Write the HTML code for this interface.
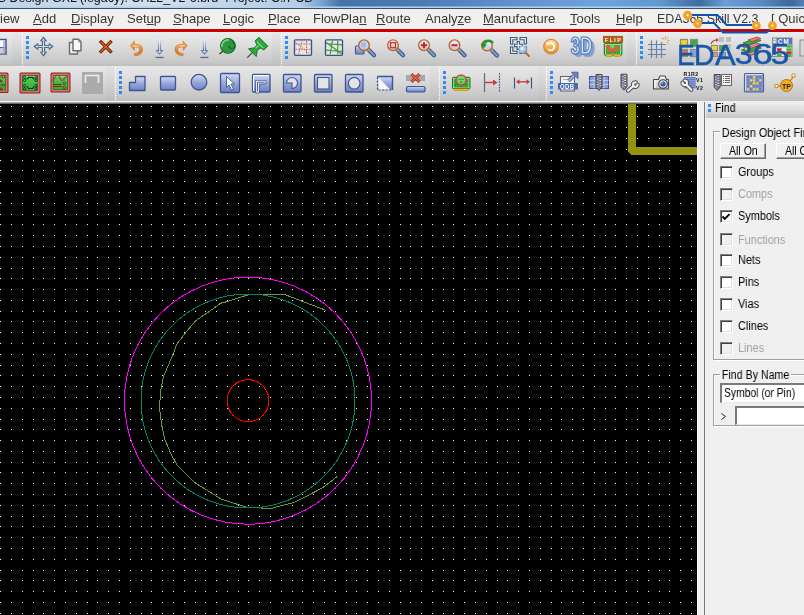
<!DOCTYPE html>
<html><head><meta charset="utf-8">
<style>
*{margin:0;padding:0;box-sizing:border-box}
#menu,#panel,.lbl,.btn,.a{will-change:transform}html,body{width:804px;height:615px;overflow:hidden;background:#000;font-family:"Liberation Sans",sans-serif;font-size:12px;color:#000}
.a{position:absolute}
#title{left:0;top:0;width:804px;height:8px;background:linear-gradient(#0000 6px,#b8d0e8 7px),linear-gradient(90deg,#c0d4ea 0px,#cfdff0 150px,#b4cce6 300px,#6f9ccc 325px,#4474aa 340px,#4a7cb4 420px,#5c90cc 500px,#6ea4dc 600px,#6098d0 660px,#3e6c9e 700px,#6a9ed6 725px,#5a8cc4 760px,#3e6a9a 790px,#5080b8 804px);overflow:hidden}
#title span{position:absolute;left:-62px;top:-9px;line-height:14px;font-size:12.5px;color:#111;white-space:nowrap}
#tline{left:0;top:8px;width:804px;height:1px;background:#3a5068}
#menu{left:0;top:9px;width:804px;height:20px;background:#f0f0f0}
.m{position:absolute;top:2px;font-size:13px;line-height:15px;white-space:nowrap;transform-origin:0 0;color:#383838}
.m u{text-decoration:underline;text-decoration-thickness:1px;text-underline-offset:1px}
#red{left:0;top:29px;width:804px;height:3px;background:#cc0000}
#tb1{left:0;top:32px;width:804px;height:34px;background:linear-gradient(#ececec,#dbdbdb 45%,#c8c8c8 88%,#bdbdbd)}
#tb2{left:0;top:66px;width:804px;height:35px;background:linear-gradient(#e8e8e8,#d9d9d9 45%,#c8c8c8 85%,#bfbfbf)}
#tbl{left:0;top:101px;width:804px;height:3px;background:linear-gradient(#fafafa,#e4e4e4)}
.sep{position:absolute;width:1px;background:repeating-linear-gradient(#fff 0 1px,transparent 1px 2px)}
.grip{position:absolute;width:3px;background:repeating-linear-gradient(#2a8cff 0 3px,transparent 3px 5px)}
#canvas{left:0;top:104px;width:697px;height:511px;background:#000;overflow:hidden}
#split{left:697px;top:101px;width:8px;height:514px;background:#f0f0f0}
#panel{left:705px;top:101px;width:99px;height:514px;background:#f0f0f0}
#phead{left:0;top:0;width:99px;height:17px;background:linear-gradient(#f2f2f2,#dadada 60%,#c8c8c8)}
.cb{position:absolute;width:13px;height:13px;background:#fff;border-top:1px solid #808080;border-left:1px solid #808080;border-right:1px solid #fff;border-bottom:1px solid #fff;box-shadow:inset 1px 1px 0 #404040, inset -1px -1px 0 #dfdfdf}
.cb.dis{background:#f0f0f0}
.lbl{position:absolute;white-space:nowrap}
.lbl.dis{color:#a0a0a0}
.cb{left:720px}
.lbl{left:738px;transform:scaleX(.91);transform-origin:0 0}
.btn{background:#f0f0f0;border-top:1px solid #fff;border-left:1px solid #fff;border-right:1px solid #696969;border-bottom:1px solid #696969;box-shadow:inset -1px -1px 0 #a0a0a0;text-align:center;line-height:14px;white-space:nowrap}
</style></head><body>
<div id="title" class="a"><span>Allegro PCB Design GXL (legacy): CH22_V2-6.brd &nbsp;Project: C:/PCB</span></div>
<div id="tline" class="a"></div>
<div id="menu" class="a">
<span class="m" style="left:0px">iew</span>
<span class="m" style="left:33px"><u>A</u>dd</span>
<span class="m" style="left:71px"><u>D</u>isplay</span>
<span class="m" style="left:127px">Set<u>u</u>p</span>
<span class="m" style="left:173px"><u>S</u>hape</span>
<span class="m" style="left:223px"><u>L</u>ogic</span>
<span class="m" style="left:268px"><u>P</u>lace</span>
<span class="m" style="left:313px">FlowPla<u>n</u></span>
<span class="m" style="left:376px"><u>R</u>oute</span>
<span class="m" style="left:425px">Analy<u>z</u>e</span>
<span class="m" style="left:483px"><u>M</u>anufacture</span>
<span class="m" style="left:570px"><u>T</u>ools</span>
<span class="m" style="left:616px"><u>H</u>elp</span>
<span class="m" style="left:657px;transform:scaleX(.955)">EDA365 Skill V2.3</span>
<span class="m" style="left:771px">[ Quick</span>
</div>
<div id="red" class="a"></div>
<div id="tb1" class="a"></div>
<div class="a" style="left:0;top:28px;width:804px;height:1px;background:#e2f6f6"></div>
<div class="a" style="left:0;top:32px;width:804px;height:1px;background:#e4f4f4"></div>
<div id="tb2" class="a"></div>
<div id="tbl" class="a"></div>
<svg class="a" style="left:0;top:0" width="804" height="104" viewBox="0 0 804 104">
<defs>
<linearGradient id="gblue" x1="0" y1="0" x2="0" y2="1"><stop offset="0" stop-color="#c4cff0"/><stop offset="1" stop-color="#6a7dbd"/></linearGradient>
<linearGradient id="ggreen" x1="0" y1="0" x2="0" y2="1"><stop offset="0" stop-color="#7ada7a"/><stop offset="1" stop-color="#2a9a2a"/></linearGradient>
<linearGradient id="gorange" x1="0" y1="0" x2="0" y2="1"><stop offset="0" stop-color="#ffe8c0"/><stop offset=".5" stop-color="#f8b050"/><stop offset="1" stop-color="#e88020"/></linearGradient>
<linearGradient id="glens" x1="0" y1="0" x2="0" y2="1"><stop offset="0" stop-color="#f4f8ff"/><stop offset="1" stop-color="#b0c0e4"/></linearGradient>
<linearGradient id="ggray" x1="0" y1="0" x2="0" y2="1"><stop offset="0" stop-color="#fafafa"/><stop offset="1" stop-color="#c0c0c0"/></linearGradient>
<pattern id="sep" width="1" height="2" patternUnits="userSpaceOnUse"><rect width="1" height="1" fill="#fff"/></pattern>
<pattern id="grip" width="3" height="5" patternUnits="userSpaceOnUse"><rect width="3" height="3" fill="#2288ff"/></pattern>
<g id="handle"><path d="M5 5l5 5" stroke="#3e5a8a" stroke-width="4.2" stroke-linecap="round"/><path d="M5 5l5 5" stroke="#7d9acb" stroke-width="2" stroke-linecap="round"/><path d="M3.6 3.6l1.6 1.6" stroke="#e0a040" stroke-width="2.4"/></g>
<g id="lens"><use href="#handle"/><circle r="5.3" fill="url(#glens)" stroke="#b4662a" stroke-width="1.4"/><circle r="4.2" fill="none" stroke="#e8c8b0" stroke-width=".7"/></g>
<linearGradient id="gshaft" x1="0" y1="0" x2="0" y2="1"><stop offset="0" stop-color="#e8eef6"/><stop offset="1" stop-color="#4d6d94"/></linearGradient>
<g id="darrow"><rect x="-1.6" y="0" width="3.2" height="12.5" fill="url(#gshaft)"/><rect x="-.5" y="1" width="1" height="11" fill="#f0f4fa" opacity=".7"/><path d="M-4 11.3L0 15.8 4 11.3H1.4L0 13-1.4 11.3z" fill="#4d6d94"/><path d="M-2.2 12l2.2 2.5 2.2-2.5" fill="#c8d4e4"/><rect x="-4" y="17.8" width="8" height="1.3" fill="#4d6d94"/></g>
<linearGradient id="gundo" x1="0" y1="0" x2="1" y2="1"><stop offset="0" stop-color="#f8d8a8"/><stop offset=".6" stop-color="#e8963e"/><stop offset="1" stop-color="#c86a1e"/></linearGradient>
<g id="undo"><path d="M1 5.2L5.6 .8 5.3 10.2z" fill="url(#gundo)" stroke="#d07a30" stroke-width=".5"/><path d="M4.5 5.6C8.5 5 12.2 6.2 12.2 9.4 12.2 12 9.5 14 6.5 14.4" fill="none" stroke="#d07a30" stroke-width="3.4" stroke-linecap="round"/><path d="M4.5 5.6C8.5 5 12.2 6.2 12.2 9.4 12.2 12 9.5 14 6.5 14.4" fill="none" stroke="url(#gundo)" stroke-width="2" stroke-linecap="round"/></g>
<linearGradient id="gbox" x1="0" y1="0" x2="0" y2="1"><stop offset="0" stop-color="#d4dcf4"/><stop offset=".5" stop-color="#98a8dc"/><stop offset="1" stop-color="#6e82c0"/></linearGradient>
<g id="wrench"><path d="M-2.5 0H-9.5M1.76-1.48A2.3 2.3 0 1 0 1.76 1.48" fill="none" stroke="#505050" stroke-width="4.2" stroke-linecap="round"/><path d="M-2.5 0H-9.5M1.76-1.48A2.3 2.3 0 1 0 1.76 1.48" fill="none" stroke="#f2f2f2" stroke-width="2.2" stroke-linecap="round"/></g>
<g id="drill"><path d="M0 0h6v12.5l-3 3.5-3-3.5z" fill="#8a8a98" stroke="#3a3a44" stroke-width=".9" stroke-linejoin="round"/><path d="M1 2.5l4-1.5M1 5l4-1.5M1 7.5l4-1.5M1 10l4-1.5M1 12.5l4-1.5" stroke="#e8ecf8" stroke-width="1"/><path d="M1 1.5l4 1M1 4l4 1M1 6.5l4 1M1 9l4 1M1 11.5l4 1" stroke="#404a68" stroke-width=".7"/></g>
</defs>
<!-- group boundaries (subtle) -->
<g fill="#000" opacity=".018">
<rect x="12" y="32" width="9" height="33" rx="3"/>
<rect x="272" y="32" width="8" height="33" rx="3"/>
<rect x="627" y="32" width="8" height="33" rx="3"/>
<rect x="106" y="66" width="8" height="35" rx="3"/>
<rect x="430" y="66" width="8" height="35" rx="3"/>
<rect x="538" y="66" width="7" height="35" rx="3"/>
</g>
<!-- separators -->
<rect x="22" y="33" width="1" height="1" fill="#fff"/><rect x="22" y="35" width="1" height="1" fill="#fff"/><rect x="22" y="37" width="1" height="1" fill="#fff"/><rect x="22" y="39" width="1" height="1" fill="#fff"/><rect x="22" y="41" width="1" height="1" fill="#fff"/><rect x="22" y="43" width="1" height="1" fill="#fff"/><rect x="22" y="45" width="1" height="1" fill="#fff"/><rect x="22" y="47" width="1" height="1" fill="#fff"/><rect x="22" y="49" width="1" height="1" fill="#fff"/><rect x="22" y="51" width="1" height="1" fill="#fff"/><rect x="22" y="53" width="1" height="1" fill="#fff"/><rect x="22" y="55" width="1" height="1" fill="#fff"/><rect x="22" y="57" width="1" height="1" fill="#fff"/><rect x="22" y="59" width="1" height="1" fill="#fff"/><rect x="22" y="61" width="1" height="1" fill="#fff"/><rect x="22" y="63" width="1" height="1" fill="#fff"/><rect x="22" y="65" width="1" height="1" fill="#fff"/>
<rect x="281" y="33" width="1" height="1" fill="#fff"/><rect x="281" y="35" width="1" height="1" fill="#fff"/><rect x="281" y="37" width="1" height="1" fill="#fff"/><rect x="281" y="39" width="1" height="1" fill="#fff"/><rect x="281" y="41" width="1" height="1" fill="#fff"/><rect x="281" y="43" width="1" height="1" fill="#fff"/><rect x="281" y="45" width="1" height="1" fill="#fff"/><rect x="281" y="47" width="1" height="1" fill="#fff"/><rect x="281" y="49" width="1" height="1" fill="#fff"/><rect x="281" y="51" width="1" height="1" fill="#fff"/><rect x="281" y="53" width="1" height="1" fill="#fff"/><rect x="281" y="55" width="1" height="1" fill="#fff"/><rect x="281" y="57" width="1" height="1" fill="#fff"/><rect x="281" y="59" width="1" height="1" fill="#fff"/><rect x="281" y="61" width="1" height="1" fill="#fff"/><rect x="281" y="63" width="1" height="1" fill="#fff"/><rect x="281" y="65" width="1" height="1" fill="#fff"/>
<rect x="636" y="33" width="1" height="1" fill="#fff"/><rect x="636" y="35" width="1" height="1" fill="#fff"/><rect x="636" y="37" width="1" height="1" fill="#fff"/><rect x="636" y="39" width="1" height="1" fill="#fff"/><rect x="636" y="41" width="1" height="1" fill="#fff"/><rect x="636" y="43" width="1" height="1" fill="#fff"/><rect x="636" y="45" width="1" height="1" fill="#fff"/><rect x="636" y="47" width="1" height="1" fill="#fff"/><rect x="636" y="49" width="1" height="1" fill="#fff"/><rect x="636" y="51" width="1" height="1" fill="#fff"/><rect x="636" y="53" width="1" height="1" fill="#fff"/><rect x="636" y="55" width="1" height="1" fill="#fff"/><rect x="636" y="57" width="1" height="1" fill="#fff"/><rect x="636" y="59" width="1" height="1" fill="#fff"/><rect x="636" y="61" width="1" height="1" fill="#fff"/><rect x="636" y="63" width="1" height="1" fill="#fff"/><rect x="636" y="65" width="1" height="1" fill="#fff"/>
<rect x="115" y="67" width="1" height="1" fill="#fff"/><rect x="115" y="69" width="1" height="1" fill="#fff"/><rect x="115" y="71" width="1" height="1" fill="#fff"/><rect x="115" y="73" width="1" height="1" fill="#fff"/><rect x="115" y="75" width="1" height="1" fill="#fff"/><rect x="115" y="77" width="1" height="1" fill="#fff"/><rect x="115" y="79" width="1" height="1" fill="#fff"/><rect x="115" y="81" width="1" height="1" fill="#fff"/><rect x="115" y="83" width="1" height="1" fill="#fff"/><rect x="115" y="85" width="1" height="1" fill="#fff"/><rect x="115" y="87" width="1" height="1" fill="#fff"/><rect x="115" y="89" width="1" height="1" fill="#fff"/><rect x="115" y="91" width="1" height="1" fill="#fff"/><rect x="115" y="93" width="1" height="1" fill="#fff"/><rect x="115" y="95" width="1" height="1" fill="#fff"/><rect x="115" y="97" width="1" height="1" fill="#fff"/><rect x="115" y="99" width="1" height="1" fill="#fff"/>
<rect x="439" y="67" width="1" height="1" fill="#fff"/><rect x="439" y="69" width="1" height="1" fill="#fff"/><rect x="439" y="71" width="1" height="1" fill="#fff"/><rect x="439" y="73" width="1" height="1" fill="#fff"/><rect x="439" y="75" width="1" height="1" fill="#fff"/><rect x="439" y="77" width="1" height="1" fill="#fff"/><rect x="439" y="79" width="1" height="1" fill="#fff"/><rect x="439" y="81" width="1" height="1" fill="#fff"/><rect x="439" y="83" width="1" height="1" fill="#fff"/><rect x="439" y="85" width="1" height="1" fill="#fff"/><rect x="439" y="87" width="1" height="1" fill="#fff"/><rect x="439" y="89" width="1" height="1" fill="#fff"/><rect x="439" y="91" width="1" height="1" fill="#fff"/><rect x="439" y="93" width="1" height="1" fill="#fff"/><rect x="439" y="95" width="1" height="1" fill="#fff"/><rect x="439" y="97" width="1" height="1" fill="#fff"/><rect x="439" y="99" width="1" height="1" fill="#fff"/>
<rect x="546" y="67" width="1" height="1" fill="#fff"/><rect x="546" y="69" width="1" height="1" fill="#fff"/><rect x="546" y="71" width="1" height="1" fill="#fff"/><rect x="546" y="73" width="1" height="1" fill="#fff"/><rect x="546" y="75" width="1" height="1" fill="#fff"/><rect x="546" y="77" width="1" height="1" fill="#fff"/><rect x="546" y="79" width="1" height="1" fill="#fff"/><rect x="546" y="81" width="1" height="1" fill="#fff"/><rect x="546" y="83" width="1" height="1" fill="#fff"/><rect x="546" y="85" width="1" height="1" fill="#fff"/><rect x="546" y="87" width="1" height="1" fill="#fff"/><rect x="546" y="89" width="1" height="1" fill="#fff"/><rect x="546" y="91" width="1" height="1" fill="#fff"/><rect x="546" y="93" width="1" height="1" fill="#fff"/><rect x="546" y="95" width="1" height="1" fill="#fff"/><rect x="546" y="97" width="1" height="1" fill="#fff"/><rect x="546" y="99" width="1" height="1" fill="#fff"/>
<!-- grips -->
<rect x="26" y="36" width="3" height="3" fill="#2a8cff"/><rect x="26" y="41" width="3" height="3" fill="#2a8cff"/><rect x="26" y="46" width="3" height="3" fill="#2a8cff"/><rect x="26" y="51" width="3" height="3" fill="#2a8cff"/><rect x="26" y="56" width="3" height="3" fill="#2a8cff"/>
<rect x="285" y="36" width="3" height="3" fill="#2a8cff"/><rect x="285" y="41" width="3" height="3" fill="#2a8cff"/><rect x="285" y="46" width="3" height="3" fill="#2a8cff"/><rect x="285" y="51" width="3" height="3" fill="#2a8cff"/><rect x="285" y="56" width="3" height="3" fill="#2a8cff"/>
<rect x="640" y="36" width="3" height="3" fill="#2a8cff"/><rect x="640" y="41" width="3" height="3" fill="#2a8cff"/><rect x="640" y="46" width="3" height="3" fill="#2a8cff"/><rect x="640" y="51" width="3" height="3" fill="#2a8cff"/><rect x="640" y="56" width="3" height="3" fill="#2a8cff"/>
<rect x="119" y="71" width="3" height="3" fill="#2a8cff"/><rect x="119" y="76" width="3" height="3" fill="#2a8cff"/><rect x="119" y="81" width="3" height="3" fill="#2a8cff"/><rect x="119" y="86" width="3" height="3" fill="#2a8cff"/><rect x="119" y="91" width="3" height="3" fill="#2a8cff"/>
<rect x="443" y="71" width="3" height="3" fill="#2a8cff"/><rect x="443" y="76" width="3" height="3" fill="#2a8cff"/><rect x="443" y="81" width="3" height="3" fill="#2a8cff"/><rect x="443" y="86" width="3" height="3" fill="#2a8cff"/><rect x="443" y="91" width="3" height="3" fill="#2a8cff"/>
<rect x="550" y="71" width="3" height="3" fill="#2a8cff"/><rect x="550" y="76" width="3" height="3" fill="#2a8cff"/><rect x="550" y="81" width="3" height="3" fill="#2a8cff"/><rect x="550" y="86" width="3" height="3" fill="#2a8cff"/><rect x="550" y="91" width="3" height="3" fill="#2a8cff"/>
<!-- ROW 1 -->
<!-- save partial -->
<rect x="-9" y="39.5" width="15" height="14.5" fill="#fff" stroke="#3b4b8b" stroke-width="1.4"/>
<rect x="-8" y="48" width="13" height="5.5" fill="#cfcfcf"/>
<path d="M-8 47.5h13" stroke="#5a6aa8" stroke-width="1.2"/>
<path d="M4 40.5v13" stroke="#9aa4d0" stroke-width="1.4"/>
<!-- move -->
<g transform="translate(43.5,46.5)">
<path d="M-6 0h12M0-6v12" stroke="#4d6a8c" stroke-width="3.2"/>
<path d="M-6.5 0h13M0-6.5v13" stroke="#d8e4f0" stroke-width="1"/>
<path d="M0-9.8l3.3 4.3h-6.6zM0 9.8l3.3-4.3h-6.6zM-9.8 0l4.3 3.3v-6.6zM9.8 0l-4.3 3.3v-6.6z" fill="#4d6a8c" stroke="#4d6a8c" stroke-width=".6" stroke-linejoin="round"/>
<path d="M0-8l1.5 2.2h-3zM0 8l1.5-2.2h-3zM-8 0l2.2 1.5v-3zM8 0l-2.2 1.5v-3z" fill="#e4ecf6"/>
</g>
<!-- copy -->
<path d="M69.5 42.5h8v11.5h-8z" fill="#f2f2f2" stroke="#6a6a6a" stroke-width="1.4" stroke-linejoin="round"/>
<path d="M73 39.3h5.5l2.5 2.5v9h-8z" fill="#f8f8f8" stroke="#6a6a6a" stroke-width="1.4" stroke-linejoin="round"/>
<path d="M78.5 39.5v2.5h2.3" fill="none" stroke="#8a8a8a" stroke-width=".8"/>
<!-- delete X -->
<g stroke-linecap="square">
<path d="M101 42l9.5 9.5M110.5 42l-9.5 9.5" stroke="#7a2a08" stroke-width="3.2"/>
<path d="M101 42l9.5 9.5M110.5 42l-9.5 9.5" stroke="#d8682a" stroke-width="1.2" stroke-dasharray="1.2 .8"/>
</g>
<!-- undo -->
<use href="#undo" x="129" y="40.2"/>
<use href="#darrow" x="159.5" y="39"/>
<use href="#undo" transform="translate(188.5,40.2) scale(-1,1)"/>
<use href="#darrow" x="204.5" y="39"/>
<!-- green circle pin -->
<path d="M223.5 50.5l-4 3.5" stroke="#3a3a3a" stroke-width="1.3"/>
<circle cx="227.9" cy="45.9" r="7.3" fill="#2c9a3c" stroke="#18682a" stroke-width="1.1"/>
<path d="M222 47a6 6 0 0 1 7-7" fill="none" stroke="#7ad08a" stroke-width="1.6"/>
<path d="M229 45.5a3 3 0 1 0 3-3" fill="none" stroke="#18682a" stroke-width="1.2"/>
<!-- pushpin -->
<g transform="translate(247.3,57.7) rotate(-45) scale(.84)">
<path d="M0 0h9" stroke="#3a3a3a" stroke-width="1.3"/>
<path d="M8.5-6.5L14-2.5h5l1.5-5h6.5v15h-6.5l-1.5-5h-5l-5.5 4z" fill="#2ea83c" stroke="#146a1e" stroke-width="1" stroke-linejoin="round"/>
<path d="M21.5-5.5v11M15-1h5" stroke="#8ae08a" stroke-width="1.2"/>
</g>
<!-- ratsnest -->
<rect x="294.5" y="39.8" width="17" height="15.5" rx="1" fill="#e6e6e6" stroke="#3a5090" stroke-width="1.35"/>
<path d="M306.5 41v13M295.5 44h15M295.5 49.3h15M295.5 42.5l15 12M298.5 54.5l3.5-13.5" fill="none" stroke="#c86060" stroke-width="1" stroke-dasharray="1.6 1.1"/>
<!-- green lines box -->
<rect x="325.5" y="39.8" width="17" height="15.5" rx="1" fill="#e6e6e6" stroke="#3a5090" stroke-width="1.35"/>
<path d="M337.7 40.5v14M332.5 40.5l-2.3 14M326 43.5l16 1.3M326 50.2l16 1.3M326.3 42.6l15.5 11.5" fill="none" stroke="#3a9a3a" stroke-width="1.2"/>
<!-- zoom fit -->
<rect x="355.5" y="46" width="8.5" height="8" rx="1" fill="url(#gbox)" stroke="#3e5a90" stroke-width="1.2"/>
<g transform="translate(364,45.2)"><use href="#handle"/><circle r="5.3" fill="#c8d4f0" fill-opacity=".8" stroke="#b4662a" stroke-width="1.4"/><rect x="-3" y="-3" width="5" height="5" fill="#a8b8e0"/></g>
<!-- zoom window -->
<g transform="translate(393,45.2)"><use href="#lens"/><rect x="-2.5" y="-2.5" width="5" height="5" fill="none" stroke="#d03030" stroke-width="1.3"/></g>
<!-- zoom in -->
<g transform="translate(424,45.2)"><use href="#lens"/><path d="M-3 0h6M0-3v6" stroke="#d02020" stroke-width="2"/></g>
<!-- zoom out -->
<g transform="translate(454.5,45.2)"><use href="#lens"/><path d="M-3 0h6" stroke="#d02020" stroke-width="2"/></g>
<!-- zoom prev -->
<g transform="translate(487,45.5)"><use href="#lens"/><path d="M-4 .5c1-5 7-7 10-3" fill="none" stroke="#1a9a2a" stroke-width="2.4"/><path d="M-6.5-1.5l3 4.5 3.5-4z" fill="#1a9a2a"/></g>
<!-- zoom world -->
<radialGradient id="glens2" cx=".4" cy=".35" r=".7"><stop offset="0" stop-color="#f0f8ff"/><stop offset="1" stop-color="#6a9ad4"/></radialGradient>
<g fill="#e8eef4" stroke="#3e5a78" stroke-width="1.1" stroke-linejoin="miter">
<path d="M510.5 44V37.5H517V39.8H512.8V44Z"/>
<path d="M520 37.5H526.5V44H524.2V39.8H520Z"/>
<path d="M510.5 47V53.5H517V51.2H512.8V47Z"/>
<path d="M526.5 47V53.5H520V51.2H524.2V47Z"/>
<path d="M517.2 41.5h2.3v2.8h2.8v2.3h-2.8v2.8h-2.3v-2.8h-2.8v-2.3h2.8z"/>
</g>
<path d="M525.5 52.5l3.5 3.5" stroke="#c86a1e" stroke-width="2" stroke-linecap="round"/>
<circle cx="522.9" cy="49.6" r="3.9" fill="url(#glens2)" stroke="#8ab0d8" stroke-width=".6"/>
<!-- redraw -->
<circle cx="551" cy="46.7" r="7.3" fill="url(#gorange)" stroke="#e08a30" stroke-width="1.2"/>
<path d="M548 44.5a3.5 3.5 0 1 1 0 4.5" fill="none" stroke="#fff" stroke-width="1.8"/>
<path d="M546 42l3.5 .5-2.5 3z" fill="#fff"/>
<!-- 3D -->
<g transform="translate(570.5,53.6) scale(.74,1)" font-family="Liberation Sans" font-weight="bold" font-size="23">
<text x="4.5" y="3.6" fill="#5a88c8" opacity=".55">3D</text>
<text x="3" y="2.4" fill="#6a94cc" opacity=".6">3D</text>
<text x="1.5" y="1.2" fill="#7aa0d4" opacity=".7">3D</text>
<text x="0" y="0" fill="#d4e2f2" stroke="#4a7ab4" stroke-width="1.2">3D</text>
</g>
<!-- FLIP -->
<rect x="603.3" y="36.2" width="19.5" height="6.4" fill="#b85c10" stroke="#9a4a0a" stroke-width=".6"/>
<g transform="translate(605,41.9) scale(.82,.95)"><text font-family="Liberation Sans" font-weight="bold" font-size="6.4" fill="#fff" letter-spacing="1.8">FLIP</text></g>
<rect x="604.3" y="43.3" width="17.6" height="12" rx="1" fill="#3cb03c" stroke="#1a7a1a" stroke-width="1"/>
<rect x="605.4" y="44.4" width="15.4" height="9.8" fill="none" stroke="#c8f0c8" stroke-width=".7"/>
<path d="M607.8 45.8A4.7 4.7 0 0 0 617.6 45.8" fill="none" stroke="#d86040" stroke-width="4.2"/>
<rect x="606" y="45" width="4" height="3" fill="#d86040"/>
<circle cx="612.3" cy="46.6" r="2.1" fill="#6ad86a"/>
<path d="M606 52.8h14" stroke="#1a6a1a" stroke-width=".8" stroke-dasharray="1 1.2"/>
<rect x="606.3" y="54.8" width="6.4" height="1.8" fill="#f0c000" stroke="#a07000" stroke-width=".4"/>
<rect x="614" y="54.8" width="6.4" height="1.8" fill="#f0c000" stroke="#a07000" stroke-width=".4"/>
<!-- grid -->
<path d="M651.5 40.5v17.5M656.5 40.5v17.5M661.5 42v16M648 44.5h18M648 49.5h18M648 54.5h18" stroke="#6a80b0" stroke-width="1.2"/>
<path d="M664.5 39.6l-2.8-1.7M665.7 39l-.3-2.6M666.8 39.4l1.8-1.8M667.4 40.7h2M667 42.1l1.5 2" stroke="#e8902a" stroke-width="1"/>
<!-- icon A 4 squares -->
<g stroke="#8a8a8a" stroke-width="1.2">
<rect x="680.5" y="39.5" width="7" height="7" fill="#f8d020"/>
<rect x="690.5" y="39.5" width="7" height="7" fill="#3ab03a"/>
<rect x="680.5" y="49.5" width="7" height="7" fill="#e87040"/>
<rect x="690.5" y="49.5" width="7" height="7" fill="#8aa0e0"/>
</g>
<!-- icon B -->
<g fill="#bdbdbd"><rect x="719" y="37" width="5" height="5"/><rect x="726" y="37" width="5" height="5"/><rect x="726" y="44" width="5" height="5"/></g>
<g stroke="#8a8a8a" stroke-width="1">
<rect x="711.5" y="45.5" width="6" height="5" fill="#f8d020"/>
<rect x="719.5" y="45.5" width="6" height="5" fill="#3ab03a"/>
<rect x="711.5" y="52.5" width="6" height="4" fill="#e89070"/>
<rect x="719.5" y="52.5" width="6" height="4" fill="#8aa0e0"/>
</g>
<path d="M711 44c1-3 3-4 6-4" fill="none" stroke="#c04040" stroke-width="1.2"/><path d="M716 38l3 2-3 2z" fill="#c04040"/>
<!-- layers -->
<g stroke-width=".8">
<path d="M741.5 53.5l12-4.5 8 2.5-12 4.5z" fill="#e88080" stroke="#a04040"/>
<path d="M741.5 50l12-4.5 8 2.5-12 4.5z" fill="#3ab03a" stroke="#1a701a"/>
<path d="M741.5 46.5l12-4.5 8 2.5-12 4.5z" fill="#e88080" stroke="#a04040"/>
<path d="M743 43l12-4.5 6 2-12 4.5z" fill="#3ab03a" stroke="#1a701a"/>
<path d="M748 40l9-3 4 1.5-9 3z" fill="#e88080" stroke="#a04040"/>
</g>
<rect x="745" y="48" width="3" height="2" fill="#f0d020"/>
<!-- CM -->
<rect x="772.5" y="38" width="19.5" height="18.5" fill="#d8d8d8" stroke="#8a8a8a" stroke-width="1"/>
<path d="M773 40.5h3M773 43.5h3M773 46.5h3M773 49.5h3M773 52.5h3" stroke="#a0a0a0" stroke-width=".8"/>
<rect x="776.5" y="38" width="15.5" height="6.5" fill="#5a78b8"/>
<g transform="translate(778,43.9) scale(.9,.9)"><text font-family="Liberation Sans" font-weight="bold" font-size="7" fill="#fff" letter-spacing="1">CM</text></g>
<g fill="#30c030"><rect x="786.5" y="45.2" width="4.8" height="2.4"/><rect x="786.5" y="48.4" width="4.8" height="2.4"/><rect x="777" y="54" width="4.5" height="2"/><rect x="786.5" y="54" width="4.8" height="2"/></g>
<g fill="#f01010"><rect x="777" y="48.4" width="4.5" height="2.4"/><rect x="786.5" y="51.4" width="4.8" height="2.4"/></g>
<g fill="#f4f4f4"><rect x="782" y="48.4" width="4" height="2.4"/><rect x="782" y="54" width="4" height="2"/><rect x="777" y="45.2" width="9" height="2.4" fill="#e8e8e8"/></g>
<rect x="800" y="40" width="6" height="16" fill="#d8d8d8" stroke="#8a8a8a"/>

<!-- ROW 2 -->
<linearGradient id="ggreen2" x1="0" y1="0" x2="0" y2="1"><stop offset="0" stop-color="#a8eea8"/><stop offset=".12" stop-color="#52c852"/><stop offset="1" stop-color="#38aa38"/></linearGradient>
<rect x="-12.5" y="72.5" width="21" height="20.5" rx="1.5" fill="#8a2020"/>
<rect x="-11.5" y="73.5" width="19" height="18.5" rx="1" fill="#ea6868"/>
<rect x="-10" y="75" width="16" height="15.5" fill="#1a8a2a"/>
<rect x="-9" y="76" width="14" height="13.5" fill="url(#ggreen2)"/>
<path d="M-3 77h5M-3 81h5M-3 85h5M-3 89h5" stroke="#8a2020" stroke-width=".9"/>
<g fill="none" stroke="#8a2020" stroke-width=".8"><circle cx="3.5" cy="77" r="1.2"/><circle cx="3.5" cy="85" r="1.2"/><circle cx="1" cy="81" r="1.2"/><circle cx="1" cy="89" r="1.2"/></g>
<rect x="19.5" y="72.5" width="21" height="21" rx="1.5" fill="#8a2020"/>
<rect x="20.5" y="73.5" width="19" height="19" rx="1" fill="#ea6868"/>
<rect x="22" y="75" width="16" height="16" fill="#1a8a2a"/>
<rect x="23" y="76" width="14" height="14" fill="url(#ggreen2)"/>
<path d="M27 79.2l1.5-1.8h4l1.5 1.8M27 86.5l1.5 2h4l1.5-2" fill="none" stroke="#102a10" stroke-width="1.1"/>
<g fill="none" stroke="#102a10" stroke-width=".8"><circle cx="24.5" cy="77.3" r="1.2"/><circle cx="24.5" cy="80.3" r="1.2"/><circle cx="36" cy="77.3" r="1.2"/><circle cx="36" cy="80.3" r="1.2"/><circle cx="24.5" cy="85.6" r="1.2"/><circle cx="24.5" cy="88.7" r="1.2"/><circle cx="36" cy="85.6" r="1.2"/><circle cx="36" cy="88.7" r="1.2"/></g>
<path d="M25.5 78.3l1.2 1.4M35 78.3l-1.2 1.4M25.5 87.5l1.2-1.4M35 87.5l-1.2-1.4" stroke="#4a5ad0" stroke-width="1.1"/>
<rect x="50.5" y="72.5" width="20" height="20" rx="1.5" fill="#8a2020"/>
<rect x="51.5" y="73.5" width="18" height="18" rx="1" fill="#ea6868"/>
<rect x="53" y="75" width="15" height="15" fill="#1a8a2a"/>
<rect x="54" y="76" width="13" height="13" fill="url(#ggreen2)"/>
<path d="M52.5 80.5c2-1 3-5.5 5-5.5s2.5 5.5 4.5 5.5 3.5-5 6.5-5.5" fill="none" stroke="#b03040" stroke-width="1.1"/>
<path d="M53.2 84.4h8.5M53.2 86.4h8.5" stroke="#8a2020" stroke-width="1"/>
<g fill="none" stroke="#8a2020" stroke-width=".9"><circle cx="64.4" cy="83.3" r="1.3"/><circle cx="64.4" cy="87.4" r="1.3"/></g>
<rect x="82" y="72" width="21" height="22" rx="1" fill="#ababab"/>
<path d="M85.5 83v-7.5h13v7.5" fill="none" stroke="#ededed" stroke-width="1.6"/>
<!-- shapes -->
<path d="M129.5 90.5v-8h6v-6h9.5v14z" fill="url(#gbox)" stroke="#3e5590" stroke-width="1.3" stroke-linejoin="round"/>
<rect x="160.5" y="76.5" width="15" height="13.5" rx="1" fill="url(#gbox)" stroke="#3e5590" stroke-width="1.3"/>
<circle cx="199" cy="82.2" r="7.8" fill="url(#gbox)" stroke="#3e5590" stroke-width="1.3"/>
<rect x="220.5" y="73.5" width="19" height="19" rx="1" fill="url(#gbox)" stroke="#3e5590" stroke-width="1.3"/>
<path d="M226.5 76.5v11l2.5-2.5 2.5 5 2-1-2.5-5h3.5z" fill="#fff" stroke="#3e5590" stroke-width=".9" stroke-linejoin="round"/>
<rect x="252.5" y="74.5" width="17.5" height="17.5" rx="1" fill="url(#gbox)" stroke="#3e5590" stroke-width="1.3"/>
<path d="M253.5 91V75.5H269" fill="none" stroke="#fff" stroke-width="1"/>
<path d="M257.5 91.5V82.2H264.5" fill="none" stroke="#4a62a0" stroke-width="4.6" stroke-linecap="round"/>
<path d="M257.5 91.5V82.2H264.5" fill="none" stroke="#f4f4f4" stroke-width="2.8" stroke-linecap="round"/>
<path d="M257.5 91.5V82.2H264.8" fill="none" stroke="#4a62a0" stroke-width="1"/>
<rect x="283.5" y="74.5" width="17.5" height="17.5" rx="1" fill="url(#gbox)" stroke="#3e5590" stroke-width="1.3"/>
<path d="M292 83v5.5a5.5 5.5 0 1 0-5.5-5.5z" fill="#e4e4e4" stroke="#3e5590" stroke-width="1.1"/>
<rect x="314.5" y="74.5" width="17.5" height="17.5" rx="1" fill="url(#gbox)" stroke="#3e5590" stroke-width="1.3"/>
<rect x="317.5" y="77.5" width="11.5" height="11.5" fill="#e4e4e4" stroke="#3e5590" stroke-width="1.1"/>
<rect x="345.5" y="74.5" width="17.5" height="17.5" rx="1" fill="url(#gbox)" stroke="#3e5590" stroke-width="1.3"/>
<circle cx="354.2" cy="83.2" r="5.8" fill="#e4e4e4" stroke="#3e5590" stroke-width="1.1"/>
<path d="M377.5 76.5h15v13h-13z" fill="#f8f8f8"/>
<path d="M377.5 76.5h15v13.5h-2z" fill="url(#gbox)"/>
<path d="M377.5 77v13h15v-13.5h-15" fill="none" stroke="#3e5590" stroke-width="1.2" stroke-dasharray="2.2 1.3"/>
<path d="M377.5 76.5h15v13.5" fill="none" stroke="#3e5590" stroke-width="1.3"/>
<!-- delete bar -->
<rect x="406" y="75" width="19" height="6" fill="#a8a8a8"/>
<path d="M411.5 74l8 8M419.5 74l-8 8" stroke="#a82a1a" stroke-width="3"/>
<path d="M411.5 74l8 8M419.5 74l-8 8" stroke="#e86a4a" stroke-width="1.2"/>
<rect x="406.5" y="86.5" width="18.5" height="5.5" rx="1.5" fill="url(#gbox)" stroke="#3e5590" stroke-width="1.2"/>
<!-- green board red circle -->
<rect x="452.5" y="77.3" width="17.5" height="11.5" rx="1" fill="#3aaa3a" stroke="#167016" stroke-width="1"/>
<rect x="453.6" y="78.4" width="15.3" height="9.3" fill="none" stroke="#b8e8b8" stroke-width=".7"/>
<path d="M455 81.5h13M455 84.5h13M455 87h13" stroke="#1a6a1a" stroke-width=".8" stroke-dasharray="1.2 .9"/>
<rect x="454.3" y="88.8" width="6.5" height="1.9" fill="#f0c000" stroke="#a07000" stroke-width=".4"/>
<rect x="461.8" y="88.8" width="6.5" height="1.9" fill="#f0c000" stroke="#a07000" stroke-width=".4"/>
<circle cx="461.1" cy="79.9" r="4.9" fill="#6ad86a" stroke="#d04848" stroke-width="1.6"/>
<path d="M459 79v1M461 79v1M463 79v1M460 82h2" stroke="#1a6a1a" stroke-width=".9"/>
<!-- offset -->
<path d="M484.5 73v19" stroke="#6a6a6a" stroke-width="1.2"/>
<path d="M485 82.5h9" stroke="#c83a3a" stroke-width="1.4"/><path d="M493 79.5l4.5 3-4.5 3z" fill="#c83a3a"/>
<path d="M499.5 73v19" stroke="#3e5590" stroke-width="1.2" stroke-dasharray="1.6 1.2"/>
<!-- dimension -->
<path d="M514.5 77.5v11M531.5 77.5v11" stroke="#3e5590" stroke-width="1.2"/>
<path d="M517 81.8h12" stroke="#c83a3a" stroke-width="1.3"/><path d="M516 81.8l3.5-2.5v5zM530 81.8l-3.5-2.5v5z" fill="#c83a3a"/>
<!-- ODB -->
<rect x="560.5" y="76.5" width="14" height="14.5" fill="#f4f4f4" stroke="#6a6a6a" stroke-width="1.1"/>
<path d="M563 79.5h6" stroke="#aaa" stroke-width="1"/>
<rect x="558" y="83" width="20" height="6.5" fill="#4a6ab0"/>
<g transform="translate(560,88.8) scale(.85,1)"><text font-family="Liberation Sans" font-weight="bold" font-size="7" fill="#fff" letter-spacing=".5">ODB</text></g>
<path d="M568.5 81l6-6" stroke="#3e5590" stroke-width="3.6"/><path d="M568.5 81l6-6" stroke="#a4b8e4" stroke-width="1.8"/><path d="M571.5 72.2h6.5v6.5z" fill="#6a88c8" stroke="#3e5590" stroke-width=".8"/>
<!-- grid drill -->
<rect x="589.5" y="76.5" width="19" height="12" fill="#8a9ad8" stroke="#3e5590" stroke-width="1"/>
<path d="M594 76.5v12M604 76.5v12M589.5 80.5h19M589.5 84.5h19" stroke="#c8d4f4" stroke-width=".8"/>
<use href="#drill" x="596" y="74.5"/>
<!-- drill wrench -->
<use href="#drill" x="621" y="74.2"/>
<use href="#wrench" transform="translate(635.3,84.6) rotate(-39.5)"/>
<!-- camera -->
<path d="M653.5 79.5h5l1.5-3.5h5l1.5 3.5h2v9.5h-15z" fill="url(#ggray)" stroke="#4a4a4a" stroke-width="1.1" stroke-linejoin="round"/>
<path d="M655 80.5v7.5" stroke="#fff" stroke-width="1.2"/>
<circle cx="663" cy="84" r="4.3" fill="#e8e8e8" stroke="#3a3a3a" stroke-width="1.1"/>
<circle cx="663" cy="84" r="2.6" fill="#3a5aa8"/>
<circle cx="662.2" cy="83.2" r=".8" fill="#c8d8f8"/>
<!-- R1R2 -->
<g fill="#5a78c8"><rect x="684" y="77" width="11" height="11.5" opacity=".35"/></g>
<path d="M684.5 77.5h11M684.5 79.5h11M684.5 81.5h11M684.5 83.5h11M684.5 85.5h11M684.5 87.5h11M685 77v11.5M687 77v11.5M689 77v11.5M691 77v11.5M693 77v11.5M695 77v11.5" stroke="#5a78c8" stroke-width=".9"/>
<g transform="translate(683.5,75.8) scale(.8,.75)"><text font-family="Liberation Sans" font-weight="bold" font-size="6.5" fill="#111" letter-spacing=".6">R1R2</text></g>
<g transform="translate(696,81.5) scale(.8,.75)"><text font-family="Liberation Sans" font-weight="bold" font-size="6.5" fill="#111" letter-spacing=".6">V1</text></g>
<g transform="translate(696,90) scale(.8,.75)"><text font-family="Liberation Sans" font-weight="bold" font-size="6.5" fill="#111" letter-spacing=".6">V2</text></g>
<use href="#wrench" transform="translate(684.8,82.8) rotate(-133)"/>
<!-- drill list -->
<use href="#drill" x="714.2" y="74.5"/>
<rect x="721.5" y="74.5" width="10" height="11" fill="#f6f6f6" stroke="#6a6a6a" stroke-width="1.1"/>
<path d="M723 76.5h1M725 76.5h5M723 78.5h1M725 78.5h5M723 80.5h1M725 80.5h5M723 82.5h1M725 82.5h5" stroke="#666" stroke-width="1"/>
<!-- blue grid -->
<rect x="744.5" y="73.5" width="19" height="18.5" rx="1" fill="#8a9ad0" stroke="#4a62a0" stroke-width="1.2"/>
<path d="M745.6 91V74.6H762.5" fill="none" stroke="#f4f6fc" stroke-width=".8"/>
<g fill="#6a7cb4"><rect x="747" y="76.2" width="2.2" height="2.2"/><rect x="747" y="79.2" width="2.2" height="2.2"/><rect x="747" y="82.2" width="2.2" height="2.2"/><rect x="747" y="85.2" width="2.2" height="2.2"/><rect x="747" y="88.2" width="2.2" height="2.2"/><rect x="750" y="76.2" width="2.2" height="2.2"/><rect x="750" y="79.2" width="2.2" height="2.2"/><rect x="750" y="82.2" width="2.2" height="2.2"/><rect x="750" y="85.2" width="2.2" height="2.2"/><rect x="750" y="88.2" width="2.2" height="2.2"/><rect x="753" y="76.2" width="2.2" height="2.2"/><rect x="753" y="79.2" width="2.2" height="2.2"/><rect x="753" y="82.2" width="2.2" height="2.2"/><rect x="753" y="85.2" width="2.2" height="2.2"/><rect x="753" y="88.2" width="2.2" height="2.2"/><rect x="756.2" y="76.2" width="2.2" height="2.2"/><rect x="756.2" y="79.2" width="2.2" height="2.2"/><rect x="756.2" y="82.2" width="2.2" height="2.2"/><rect x="756.2" y="85.2" width="2.2" height="2.2"/><rect x="756.2" y="88.2" width="2.2" height="2.2"/><rect x="759.2" y="76.2" width="2.2" height="2.2"/><rect x="759.2" y="79.2" width="2.2" height="2.2"/><rect x="759.2" y="82.2" width="2.2" height="2.2"/><rect x="759.2" y="85.2" width="2.2" height="2.2"/><rect x="759.2" y="88.2" width="2.2" height="2.2"/></g>
<g fill="#f8d840"><rect x="753" y="76.2" width="2.2" height="2.2"/><rect x="750" y="79.2" width="2.2" height="2.2"/><rect x="753" y="79.2" width="2.2" height="2.2"/><rect x="759.2" y="79.2" width="2.2" height="2.2"/><rect x="753" y="82.2" width="2.2" height="2.2"/><rect x="756.2" y="82.2" width="2.2" height="2.2"/><rect x="750" y="85.2" width="2.2" height="2.2"/><rect x="747" y="88.2" width="2.2" height="2.2"/><rect x="753" y="88.2" width="2.2" height="2.2"/><rect x="756.2" y="88.2" width="2.2" height="2.2"/></g>
<!-- TP -->
<path d="M778 86h4M790 81l4-5" stroke="#d08a20" stroke-width="1.3"/>
<circle cx="776.5" cy="86" r="1.7" fill="#fff" stroke="#d08a20" stroke-width="1.1"/>
<circle cx="793.5" cy="75.5" r="1.7" fill="#fff" stroke="#d08a20" stroke-width="1.1"/>
<circle cx="786.5" cy="85.5" r="6" fill="#f0b020" stroke="#b87010" stroke-width="1"/>
<text x="782" y="88.5" font-family="Liberation Sans" font-weight="bold" font-size="7" fill="#222">TP</text>

</svg>
<svg class="a" style="left:0;top:0" width="804" height="104" viewBox="0 0 804 104">
<!-- EDA365 watermark -->
<g fill="none" stroke="#1252b0" stroke-width="2">
<path d="M688 15H717.5l9 10H756"/>
<path d="M698 23H714l9 9.5H766.5l4-3.5"/>
</g>
<g fill="#fff" stroke="#f2a22a" stroke-width="3.4">
<circle cx="687.6" cy="15.3" r="2.8"/>
<circle cx="697.6" cy="23.5" r="2.8"/>
<circle cx="756.3" cy="25.6" r="2.8"/>
<circle cx="772.4" cy="25.6" r="2.8"/>
</g>
<g font-family="Liberation Sans" font-size="100" fill="#1657a7" stroke="#1657a7" stroke-width="1.6">
<text transform="translate(677.14,64.78) scale(0.2604,0.2965)">E</text>
<text transform="translate(694.05,64.78) scale(0.2841,0.2965)">D</text>
<text transform="translate(715.02,64.78) scale(0.3100,0.2965)">A</text>
<text transform="translate(734.83,64.49) scale(0.3226,0.2882)">3</text>
<text transform="translate(752.17,64.49) scale(0.3709,0.2882)">6</text>
<text transform="translate(770.56,64.49) scale(0.3396,0.2923)">5</text>
</g>
</svg>

<div id="canvas" class="a">
<svg width="697" height="511" viewBox="0 104 697 511" style="position:absolute;left:0;top:0" shape-rendering="crispEdges">
<path fill="#fff" d="M0 106h1v1h-1zM11 106h1v1h-1zM22 106h1v1h-1zM33 106h1v1h-1zM43 106h1v1h-1zM54 106h1v1h-1zM65 106h1v1h-1zM76 106h1v1h-1zM87 106h1v1h-1zM97 106h1v1h-1zM108 106h1v1h-1zM119 106h1v1h-1zM130 106h1v1h-1zM141 106h1v1h-1zM151 106h1v1h-1zM162 106h1v1h-1zM173 106h1v1h-1zM184 106h1v1h-1zM195 106h1v1h-1zM205 106h1v1h-1zM216 106h1v1h-1zM227 106h1v1h-1zM238 106h1v1h-1zM248 106h1v1h-1zM259 106h1v1h-1zM270 106h1v1h-1zM281 106h1v1h-1zM292 106h1v1h-1zM302 106h1v1h-1zM313 106h1v1h-1zM324 106h1v1h-1zM335 106h1v1h-1zM346 106h1v1h-1zM356 106h1v1h-1zM367 106h1v1h-1zM378 106h1v1h-1zM389 106h1v1h-1zM400 106h1v1h-1zM410 106h1v1h-1zM421 106h1v1h-1zM432 106h1v1h-1zM443 106h1v1h-1zM453 106h1v1h-1zM464 106h1v1h-1zM475 106h1v1h-1zM486 106h1v1h-1zM497 106h1v1h-1zM507 106h1v1h-1zM518 106h1v1h-1zM529 106h1v1h-1zM540 106h1v1h-1zM551 106h1v1h-1zM561 106h1v1h-1zM572 106h1v1h-1zM583 106h1v1h-1zM594 106h1v1h-1zM605 106h1v1h-1zM615 106h1v1h-1zM626 106h1v1h-1zM637 106h1v1h-1zM648 106h1v1h-1zM659 106h1v1h-1zM669 106h1v1h-1zM680 106h1v1h-1zM691 106h1v1h-1zM0 116h1v1h-1zM11 116h1v1h-1zM22 116h1v1h-1zM33 116h1v1h-1zM43 116h1v1h-1zM54 116h1v1h-1zM65 116h1v1h-1zM76 116h1v1h-1zM87 116h1v1h-1zM97 116h1v1h-1zM108 116h1v1h-1zM119 116h1v1h-1zM130 116h1v1h-1zM141 116h1v1h-1zM151 116h1v1h-1zM162 116h1v1h-1zM173 116h1v1h-1zM184 116h1v1h-1zM195 116h1v1h-1zM205 116h1v1h-1zM216 116h1v1h-1zM227 116h1v1h-1zM238 116h1v1h-1zM248 116h1v1h-1zM259 116h1v1h-1zM270 116h1v1h-1zM281 116h1v1h-1zM292 116h1v1h-1zM302 116h1v1h-1zM313 116h1v1h-1zM324 116h1v1h-1zM335 116h1v1h-1zM346 116h1v1h-1zM356 116h1v1h-1zM367 116h1v1h-1zM378 116h1v1h-1zM389 116h1v1h-1zM400 116h1v1h-1zM410 116h1v1h-1zM421 116h1v1h-1zM432 116h1v1h-1zM443 116h1v1h-1zM453 116h1v1h-1zM464 116h1v1h-1zM475 116h1v1h-1zM486 116h1v1h-1zM497 116h1v1h-1zM507 116h1v1h-1zM518 116h1v1h-1zM529 116h1v1h-1zM540 116h1v1h-1zM551 116h1v1h-1zM561 116h1v1h-1zM572 116h1v1h-1zM583 116h1v1h-1zM594 116h1v1h-1zM605 116h1v1h-1zM615 116h1v1h-1zM626 116h1v1h-1zM637 116h1v1h-1zM648 116h1v1h-1zM659 116h1v1h-1zM669 116h1v1h-1zM680 116h1v1h-1zM691 116h1v1h-1zM0 127h1v1h-1zM11 127h1v1h-1zM22 127h1v1h-1zM33 127h1v1h-1zM43 127h1v1h-1zM54 127h1v1h-1zM65 127h1v1h-1zM76 127h1v1h-1zM87 127h1v1h-1zM97 127h1v1h-1zM108 127h1v1h-1zM119 127h1v1h-1zM130 127h1v1h-1zM141 127h1v1h-1zM151 127h1v1h-1zM162 127h1v1h-1zM173 127h1v1h-1zM184 127h1v1h-1zM195 127h1v1h-1zM205 127h1v1h-1zM216 127h1v1h-1zM227 127h1v1h-1zM238 127h1v1h-1zM248 127h1v1h-1zM259 127h1v1h-1zM270 127h1v1h-1zM281 127h1v1h-1zM292 127h1v1h-1zM302 127h1v1h-1zM313 127h1v1h-1zM324 127h1v1h-1zM335 127h1v1h-1zM346 127h1v1h-1zM356 127h1v1h-1zM367 127h1v1h-1zM378 127h1v1h-1zM389 127h1v1h-1zM400 127h1v1h-1zM410 127h1v1h-1zM421 127h1v1h-1zM432 127h1v1h-1zM443 127h1v1h-1zM453 127h1v1h-1zM464 127h1v1h-1zM475 127h1v1h-1zM486 127h1v1h-1zM497 127h1v1h-1zM507 127h1v1h-1zM518 127h1v1h-1zM529 127h1v1h-1zM540 127h1v1h-1zM551 127h1v1h-1zM561 127h1v1h-1zM572 127h1v1h-1zM583 127h1v1h-1zM594 127h1v1h-1zM605 127h1v1h-1zM615 127h1v1h-1zM626 127h1v1h-1zM637 127h1v1h-1zM648 127h1v1h-1zM659 127h1v1h-1zM669 127h1v1h-1zM680 127h1v1h-1zM691 127h1v1h-1zM0 138h1v1h-1zM11 138h1v1h-1zM22 138h1v1h-1zM33 138h1v1h-1zM43 138h1v1h-1zM54 138h1v1h-1zM65 138h1v1h-1zM76 138h1v1h-1zM87 138h1v1h-1zM97 138h1v1h-1zM108 138h1v1h-1zM119 138h1v1h-1zM130 138h1v1h-1zM141 138h1v1h-1zM151 138h1v1h-1zM162 138h1v1h-1zM173 138h1v1h-1zM184 138h1v1h-1zM195 138h1v1h-1zM205 138h1v1h-1zM216 138h1v1h-1zM227 138h1v1h-1zM238 138h1v1h-1zM248 138h1v1h-1zM259 138h1v1h-1zM270 138h1v1h-1zM281 138h1v1h-1zM292 138h1v1h-1zM302 138h1v1h-1zM313 138h1v1h-1zM324 138h1v1h-1zM335 138h1v1h-1zM346 138h1v1h-1zM356 138h1v1h-1zM367 138h1v1h-1zM378 138h1v1h-1zM389 138h1v1h-1zM400 138h1v1h-1zM410 138h1v1h-1zM421 138h1v1h-1zM432 138h1v1h-1zM443 138h1v1h-1zM453 138h1v1h-1zM464 138h1v1h-1zM475 138h1v1h-1zM486 138h1v1h-1zM497 138h1v1h-1zM507 138h1v1h-1zM518 138h1v1h-1zM529 138h1v1h-1zM540 138h1v1h-1zM551 138h1v1h-1zM561 138h1v1h-1zM572 138h1v1h-1zM583 138h1v1h-1zM594 138h1v1h-1zM605 138h1v1h-1zM615 138h1v1h-1zM626 138h1v1h-1zM637 138h1v1h-1zM648 138h1v1h-1zM659 138h1v1h-1zM669 138h1v1h-1zM680 138h1v1h-1zM691 138h1v1h-1zM0 149h1v1h-1zM11 149h1v1h-1zM22 149h1v1h-1zM33 149h1v1h-1zM43 149h1v1h-1zM54 149h1v1h-1zM65 149h1v1h-1zM76 149h1v1h-1zM87 149h1v1h-1zM97 149h1v1h-1zM108 149h1v1h-1zM119 149h1v1h-1zM130 149h1v1h-1zM141 149h1v1h-1zM151 149h1v1h-1zM162 149h1v1h-1zM173 149h1v1h-1zM184 149h1v1h-1zM195 149h1v1h-1zM205 149h1v1h-1zM216 149h1v1h-1zM227 149h1v1h-1zM238 149h1v1h-1zM248 149h1v1h-1zM259 149h1v1h-1zM270 149h1v1h-1zM281 149h1v1h-1zM292 149h1v1h-1zM302 149h1v1h-1zM313 149h1v1h-1zM324 149h1v1h-1zM335 149h1v1h-1zM346 149h1v1h-1zM356 149h1v1h-1zM367 149h1v1h-1zM378 149h1v1h-1zM389 149h1v1h-1zM400 149h1v1h-1zM410 149h1v1h-1zM421 149h1v1h-1zM432 149h1v1h-1zM443 149h1v1h-1zM453 149h1v1h-1zM464 149h1v1h-1zM475 149h1v1h-1zM486 149h1v1h-1zM497 149h1v1h-1zM507 149h1v1h-1zM518 149h1v1h-1zM529 149h1v1h-1zM540 149h1v1h-1zM551 149h1v1h-1zM561 149h1v1h-1zM572 149h1v1h-1zM583 149h1v1h-1zM594 149h1v1h-1zM605 149h1v1h-1zM615 149h1v1h-1zM626 149h1v1h-1zM637 149h1v1h-1zM648 149h1v1h-1zM659 149h1v1h-1zM669 149h1v1h-1zM680 149h1v1h-1zM691 149h1v1h-1zM0 160h1v1h-1zM11 160h1v1h-1zM22 160h1v1h-1zM33 160h1v1h-1zM43 160h1v1h-1zM54 160h1v1h-1zM65 160h1v1h-1zM76 160h1v1h-1zM87 160h1v1h-1zM97 160h1v1h-1zM108 160h1v1h-1zM119 160h1v1h-1zM130 160h1v1h-1zM141 160h1v1h-1zM151 160h1v1h-1zM162 160h1v1h-1zM173 160h1v1h-1zM184 160h1v1h-1zM195 160h1v1h-1zM205 160h1v1h-1zM216 160h1v1h-1zM227 160h1v1h-1zM238 160h1v1h-1zM248 160h1v1h-1zM259 160h1v1h-1zM270 160h1v1h-1zM281 160h1v1h-1zM292 160h1v1h-1zM302 160h1v1h-1zM313 160h1v1h-1zM324 160h1v1h-1zM335 160h1v1h-1zM346 160h1v1h-1zM356 160h1v1h-1zM367 160h1v1h-1zM378 160h1v1h-1zM389 160h1v1h-1zM400 160h1v1h-1zM410 160h1v1h-1zM421 160h1v1h-1zM432 160h1v1h-1zM443 160h1v1h-1zM453 160h1v1h-1zM464 160h1v1h-1zM475 160h1v1h-1zM486 160h1v1h-1zM497 160h1v1h-1zM507 160h1v1h-1zM518 160h1v1h-1zM529 160h1v1h-1zM540 160h1v1h-1zM551 160h1v1h-1zM561 160h1v1h-1zM572 160h1v1h-1zM583 160h1v1h-1zM594 160h1v1h-1zM605 160h1v1h-1zM615 160h1v1h-1zM626 160h1v1h-1zM637 160h1v1h-1zM648 160h1v1h-1zM659 160h1v1h-1zM669 160h1v1h-1zM680 160h1v1h-1zM691 160h1v1h-1zM0 170h1v1h-1zM11 170h1v1h-1zM22 170h1v1h-1zM33 170h1v1h-1zM43 170h1v1h-1zM54 170h1v1h-1zM65 170h1v1h-1zM76 170h1v1h-1zM87 170h1v1h-1zM97 170h1v1h-1zM108 170h1v1h-1zM119 170h1v1h-1zM130 170h1v1h-1zM141 170h1v1h-1zM151 170h1v1h-1zM162 170h1v1h-1zM173 170h1v1h-1zM184 170h1v1h-1zM195 170h1v1h-1zM205 170h1v1h-1zM216 170h1v1h-1zM227 170h1v1h-1zM238 170h1v1h-1zM248 170h1v1h-1zM259 170h1v1h-1zM270 170h1v1h-1zM281 170h1v1h-1zM292 170h1v1h-1zM302 170h1v1h-1zM313 170h1v1h-1zM324 170h1v1h-1zM335 170h1v1h-1zM346 170h1v1h-1zM356 170h1v1h-1zM367 170h1v1h-1zM378 170h1v1h-1zM389 170h1v1h-1zM400 170h1v1h-1zM410 170h1v1h-1zM421 170h1v1h-1zM432 170h1v1h-1zM443 170h1v1h-1zM453 170h1v1h-1zM464 170h1v1h-1zM475 170h1v1h-1zM486 170h1v1h-1zM497 170h1v1h-1zM507 170h1v1h-1zM518 170h1v1h-1zM529 170h1v1h-1zM540 170h1v1h-1zM551 170h1v1h-1zM561 170h1v1h-1zM572 170h1v1h-1zM583 170h1v1h-1zM594 170h1v1h-1zM605 170h1v1h-1zM615 170h1v1h-1zM626 170h1v1h-1zM637 170h1v1h-1zM648 170h1v1h-1zM659 170h1v1h-1zM669 170h1v1h-1zM680 170h1v1h-1zM691 170h1v1h-1zM0 181h1v1h-1zM11 181h1v1h-1zM22 181h1v1h-1zM33 181h1v1h-1zM43 181h1v1h-1zM54 181h1v1h-1zM65 181h1v1h-1zM76 181h1v1h-1zM87 181h1v1h-1zM97 181h1v1h-1zM108 181h1v1h-1zM119 181h1v1h-1zM130 181h1v1h-1zM141 181h1v1h-1zM151 181h1v1h-1zM162 181h1v1h-1zM173 181h1v1h-1zM184 181h1v1h-1zM195 181h1v1h-1zM205 181h1v1h-1zM216 181h1v1h-1zM227 181h1v1h-1zM238 181h1v1h-1zM248 181h1v1h-1zM259 181h1v1h-1zM270 181h1v1h-1zM281 181h1v1h-1zM292 181h1v1h-1zM302 181h1v1h-1zM313 181h1v1h-1zM324 181h1v1h-1zM335 181h1v1h-1zM346 181h1v1h-1zM356 181h1v1h-1zM367 181h1v1h-1zM378 181h1v1h-1zM389 181h1v1h-1zM400 181h1v1h-1zM410 181h1v1h-1zM421 181h1v1h-1zM432 181h1v1h-1zM443 181h1v1h-1zM453 181h1v1h-1zM464 181h1v1h-1zM475 181h1v1h-1zM486 181h1v1h-1zM497 181h1v1h-1zM507 181h1v1h-1zM518 181h1v1h-1zM529 181h1v1h-1zM540 181h1v1h-1zM551 181h1v1h-1zM561 181h1v1h-1zM572 181h1v1h-1zM583 181h1v1h-1zM594 181h1v1h-1zM605 181h1v1h-1zM615 181h1v1h-1zM626 181h1v1h-1zM637 181h1v1h-1zM648 181h1v1h-1zM659 181h1v1h-1zM669 181h1v1h-1zM680 181h1v1h-1zM691 181h1v1h-1zM0 192h1v1h-1zM11 192h1v1h-1zM22 192h1v1h-1zM33 192h1v1h-1zM43 192h1v1h-1zM54 192h1v1h-1zM65 192h1v1h-1zM76 192h1v1h-1zM87 192h1v1h-1zM97 192h1v1h-1zM108 192h1v1h-1zM119 192h1v1h-1zM130 192h1v1h-1zM141 192h1v1h-1zM151 192h1v1h-1zM162 192h1v1h-1zM173 192h1v1h-1zM184 192h1v1h-1zM195 192h1v1h-1zM205 192h1v1h-1zM216 192h1v1h-1zM227 192h1v1h-1zM238 192h1v1h-1zM248 192h1v1h-1zM259 192h1v1h-1zM270 192h1v1h-1zM281 192h1v1h-1zM292 192h1v1h-1zM302 192h1v1h-1zM313 192h1v1h-1zM324 192h1v1h-1zM335 192h1v1h-1zM346 192h1v1h-1zM356 192h1v1h-1zM367 192h1v1h-1zM378 192h1v1h-1zM389 192h1v1h-1zM400 192h1v1h-1zM410 192h1v1h-1zM421 192h1v1h-1zM432 192h1v1h-1zM443 192h1v1h-1zM453 192h1v1h-1zM464 192h1v1h-1zM475 192h1v1h-1zM486 192h1v1h-1zM497 192h1v1h-1zM507 192h1v1h-1zM518 192h1v1h-1zM529 192h1v1h-1zM540 192h1v1h-1zM551 192h1v1h-1zM561 192h1v1h-1zM572 192h1v1h-1zM583 192h1v1h-1zM594 192h1v1h-1zM605 192h1v1h-1zM615 192h1v1h-1zM626 192h1v1h-1zM637 192h1v1h-1zM648 192h1v1h-1zM659 192h1v1h-1zM669 192h1v1h-1zM680 192h1v1h-1zM691 192h1v1h-1zM0 203h1v1h-1zM11 203h1v1h-1zM22 203h1v1h-1zM33 203h1v1h-1zM43 203h1v1h-1zM54 203h1v1h-1zM65 203h1v1h-1zM76 203h1v1h-1zM87 203h1v1h-1zM97 203h1v1h-1zM108 203h1v1h-1zM119 203h1v1h-1zM130 203h1v1h-1zM141 203h1v1h-1zM151 203h1v1h-1zM162 203h1v1h-1zM173 203h1v1h-1zM184 203h1v1h-1zM195 203h1v1h-1zM205 203h1v1h-1zM216 203h1v1h-1zM227 203h1v1h-1zM238 203h1v1h-1zM248 203h1v1h-1zM259 203h1v1h-1zM270 203h1v1h-1zM281 203h1v1h-1zM292 203h1v1h-1zM302 203h1v1h-1zM313 203h1v1h-1zM324 203h1v1h-1zM335 203h1v1h-1zM346 203h1v1h-1zM356 203h1v1h-1zM367 203h1v1h-1zM378 203h1v1h-1zM389 203h1v1h-1zM400 203h1v1h-1zM410 203h1v1h-1zM421 203h1v1h-1zM432 203h1v1h-1zM443 203h1v1h-1zM453 203h1v1h-1zM464 203h1v1h-1zM475 203h1v1h-1zM486 203h1v1h-1zM497 203h1v1h-1zM507 203h1v1h-1zM518 203h1v1h-1zM529 203h1v1h-1zM540 203h1v1h-1zM551 203h1v1h-1zM561 203h1v1h-1zM572 203h1v1h-1zM583 203h1v1h-1zM594 203h1v1h-1zM605 203h1v1h-1zM615 203h1v1h-1zM626 203h1v1h-1zM637 203h1v1h-1zM648 203h1v1h-1zM659 203h1v1h-1zM669 203h1v1h-1zM680 203h1v1h-1zM691 203h1v1h-1zM0 214h1v1h-1zM11 214h1v1h-1zM22 214h1v1h-1zM33 214h1v1h-1zM43 214h1v1h-1zM54 214h1v1h-1zM65 214h1v1h-1zM76 214h1v1h-1zM87 214h1v1h-1zM97 214h1v1h-1zM108 214h1v1h-1zM119 214h1v1h-1zM130 214h1v1h-1zM141 214h1v1h-1zM151 214h1v1h-1zM162 214h1v1h-1zM173 214h1v1h-1zM184 214h1v1h-1zM195 214h1v1h-1zM205 214h1v1h-1zM216 214h1v1h-1zM227 214h1v1h-1zM238 214h1v1h-1zM248 214h1v1h-1zM259 214h1v1h-1zM270 214h1v1h-1zM281 214h1v1h-1zM292 214h1v1h-1zM302 214h1v1h-1zM313 214h1v1h-1zM324 214h1v1h-1zM335 214h1v1h-1zM346 214h1v1h-1zM356 214h1v1h-1zM367 214h1v1h-1zM378 214h1v1h-1zM389 214h1v1h-1zM400 214h1v1h-1zM410 214h1v1h-1zM421 214h1v1h-1zM432 214h1v1h-1zM443 214h1v1h-1zM453 214h1v1h-1zM464 214h1v1h-1zM475 214h1v1h-1zM486 214h1v1h-1zM497 214h1v1h-1zM507 214h1v1h-1zM518 214h1v1h-1zM529 214h1v1h-1zM540 214h1v1h-1zM551 214h1v1h-1zM561 214h1v1h-1zM572 214h1v1h-1zM583 214h1v1h-1zM594 214h1v1h-1zM605 214h1v1h-1zM615 214h1v1h-1zM626 214h1v1h-1zM637 214h1v1h-1zM648 214h1v1h-1zM659 214h1v1h-1zM669 214h1v1h-1zM680 214h1v1h-1zM691 214h1v1h-1zM0 224h1v1h-1zM11 224h1v1h-1zM22 224h1v1h-1zM33 224h1v1h-1zM43 224h1v1h-1zM54 224h1v1h-1zM65 224h1v1h-1zM76 224h1v1h-1zM87 224h1v1h-1zM97 224h1v1h-1zM108 224h1v1h-1zM119 224h1v1h-1zM130 224h1v1h-1zM141 224h1v1h-1zM151 224h1v1h-1zM162 224h1v1h-1zM173 224h1v1h-1zM184 224h1v1h-1zM195 224h1v1h-1zM205 224h1v1h-1zM216 224h1v1h-1zM227 224h1v1h-1zM238 224h1v1h-1zM248 224h1v1h-1zM259 224h1v1h-1zM270 224h1v1h-1zM281 224h1v1h-1zM292 224h1v1h-1zM302 224h1v1h-1zM313 224h1v1h-1zM324 224h1v1h-1zM335 224h1v1h-1zM346 224h1v1h-1zM356 224h1v1h-1zM367 224h1v1h-1zM378 224h1v1h-1zM389 224h1v1h-1zM400 224h1v1h-1zM410 224h1v1h-1zM421 224h1v1h-1zM432 224h1v1h-1zM443 224h1v1h-1zM453 224h1v1h-1zM464 224h1v1h-1zM475 224h1v1h-1zM486 224h1v1h-1zM497 224h1v1h-1zM507 224h1v1h-1zM518 224h1v1h-1zM529 224h1v1h-1zM540 224h1v1h-1zM551 224h1v1h-1zM561 224h1v1h-1zM572 224h1v1h-1zM583 224h1v1h-1zM594 224h1v1h-1zM605 224h1v1h-1zM615 224h1v1h-1zM626 224h1v1h-1zM637 224h1v1h-1zM648 224h1v1h-1zM659 224h1v1h-1zM669 224h1v1h-1zM680 224h1v1h-1zM691 224h1v1h-1zM0 235h1v1h-1zM11 235h1v1h-1zM22 235h1v1h-1zM33 235h1v1h-1zM43 235h1v1h-1zM54 235h1v1h-1zM65 235h1v1h-1zM76 235h1v1h-1zM87 235h1v1h-1zM97 235h1v1h-1zM108 235h1v1h-1zM119 235h1v1h-1zM130 235h1v1h-1zM141 235h1v1h-1zM151 235h1v1h-1zM162 235h1v1h-1zM173 235h1v1h-1zM184 235h1v1h-1zM195 235h1v1h-1zM205 235h1v1h-1zM216 235h1v1h-1zM227 235h1v1h-1zM238 235h1v1h-1zM248 235h1v1h-1zM259 235h1v1h-1zM270 235h1v1h-1zM281 235h1v1h-1zM292 235h1v1h-1zM302 235h1v1h-1zM313 235h1v1h-1zM324 235h1v1h-1zM335 235h1v1h-1zM346 235h1v1h-1zM356 235h1v1h-1zM367 235h1v1h-1zM378 235h1v1h-1zM389 235h1v1h-1zM400 235h1v1h-1zM410 235h1v1h-1zM421 235h1v1h-1zM432 235h1v1h-1zM443 235h1v1h-1zM453 235h1v1h-1zM464 235h1v1h-1zM475 235h1v1h-1zM486 235h1v1h-1zM497 235h1v1h-1zM507 235h1v1h-1zM518 235h1v1h-1zM529 235h1v1h-1zM540 235h1v1h-1zM551 235h1v1h-1zM561 235h1v1h-1zM572 235h1v1h-1zM583 235h1v1h-1zM594 235h1v1h-1zM605 235h1v1h-1zM615 235h1v1h-1zM626 235h1v1h-1zM637 235h1v1h-1zM648 235h1v1h-1zM659 235h1v1h-1zM669 235h1v1h-1zM680 235h1v1h-1zM691 235h1v1h-1zM0 246h1v1h-1zM11 246h1v1h-1zM22 246h1v1h-1zM33 246h1v1h-1zM43 246h1v1h-1zM54 246h1v1h-1zM65 246h1v1h-1zM76 246h1v1h-1zM87 246h1v1h-1zM97 246h1v1h-1zM108 246h1v1h-1zM119 246h1v1h-1zM130 246h1v1h-1zM141 246h1v1h-1zM151 246h1v1h-1zM162 246h1v1h-1zM173 246h1v1h-1zM184 246h1v1h-1zM195 246h1v1h-1zM205 246h1v1h-1zM216 246h1v1h-1zM227 246h1v1h-1zM238 246h1v1h-1zM248 246h1v1h-1zM259 246h1v1h-1zM270 246h1v1h-1zM281 246h1v1h-1zM292 246h1v1h-1zM302 246h1v1h-1zM313 246h1v1h-1zM324 246h1v1h-1zM335 246h1v1h-1zM346 246h1v1h-1zM356 246h1v1h-1zM367 246h1v1h-1zM378 246h1v1h-1zM389 246h1v1h-1zM400 246h1v1h-1zM410 246h1v1h-1zM421 246h1v1h-1zM432 246h1v1h-1zM443 246h1v1h-1zM453 246h1v1h-1zM464 246h1v1h-1zM475 246h1v1h-1zM486 246h1v1h-1zM497 246h1v1h-1zM507 246h1v1h-1zM518 246h1v1h-1zM529 246h1v1h-1zM540 246h1v1h-1zM551 246h1v1h-1zM561 246h1v1h-1zM572 246h1v1h-1zM583 246h1v1h-1zM594 246h1v1h-1zM605 246h1v1h-1zM615 246h1v1h-1zM626 246h1v1h-1zM637 246h1v1h-1zM648 246h1v1h-1zM659 246h1v1h-1zM669 246h1v1h-1zM680 246h1v1h-1zM691 246h1v1h-1zM0 257h1v1h-1zM11 257h1v1h-1zM22 257h1v1h-1zM33 257h1v1h-1zM43 257h1v1h-1zM54 257h1v1h-1zM65 257h1v1h-1zM76 257h1v1h-1zM87 257h1v1h-1zM97 257h1v1h-1zM108 257h1v1h-1zM119 257h1v1h-1zM130 257h1v1h-1zM141 257h1v1h-1zM151 257h1v1h-1zM162 257h1v1h-1zM173 257h1v1h-1zM184 257h1v1h-1zM195 257h1v1h-1zM205 257h1v1h-1zM216 257h1v1h-1zM227 257h1v1h-1zM238 257h1v1h-1zM248 257h1v1h-1zM259 257h1v1h-1zM270 257h1v1h-1zM281 257h1v1h-1zM292 257h1v1h-1zM302 257h1v1h-1zM313 257h1v1h-1zM324 257h1v1h-1zM335 257h1v1h-1zM346 257h1v1h-1zM356 257h1v1h-1zM367 257h1v1h-1zM378 257h1v1h-1zM389 257h1v1h-1zM400 257h1v1h-1zM410 257h1v1h-1zM421 257h1v1h-1zM432 257h1v1h-1zM443 257h1v1h-1zM453 257h1v1h-1zM464 257h1v1h-1zM475 257h1v1h-1zM486 257h1v1h-1zM497 257h1v1h-1zM507 257h1v1h-1zM518 257h1v1h-1zM529 257h1v1h-1zM540 257h1v1h-1zM551 257h1v1h-1zM561 257h1v1h-1zM572 257h1v1h-1zM583 257h1v1h-1zM594 257h1v1h-1zM605 257h1v1h-1zM615 257h1v1h-1zM626 257h1v1h-1zM637 257h1v1h-1zM648 257h1v1h-1zM659 257h1v1h-1zM669 257h1v1h-1zM680 257h1v1h-1zM691 257h1v1h-1zM0 268h1v1h-1zM11 268h1v1h-1zM22 268h1v1h-1zM33 268h1v1h-1zM43 268h1v1h-1zM54 268h1v1h-1zM65 268h1v1h-1zM76 268h1v1h-1zM87 268h1v1h-1zM97 268h1v1h-1zM108 268h1v1h-1zM119 268h1v1h-1zM130 268h1v1h-1zM141 268h1v1h-1zM151 268h1v1h-1zM162 268h1v1h-1zM173 268h1v1h-1zM184 268h1v1h-1zM195 268h1v1h-1zM205 268h1v1h-1zM216 268h1v1h-1zM227 268h1v1h-1zM238 268h1v1h-1zM248 268h1v1h-1zM259 268h1v1h-1zM270 268h1v1h-1zM281 268h1v1h-1zM292 268h1v1h-1zM302 268h1v1h-1zM313 268h1v1h-1zM324 268h1v1h-1zM335 268h1v1h-1zM346 268h1v1h-1zM356 268h1v1h-1zM367 268h1v1h-1zM378 268h1v1h-1zM389 268h1v1h-1zM400 268h1v1h-1zM410 268h1v1h-1zM421 268h1v1h-1zM432 268h1v1h-1zM443 268h1v1h-1zM453 268h1v1h-1zM464 268h1v1h-1zM475 268h1v1h-1zM486 268h1v1h-1zM497 268h1v1h-1zM507 268h1v1h-1zM518 268h1v1h-1zM529 268h1v1h-1zM540 268h1v1h-1zM551 268h1v1h-1zM561 268h1v1h-1zM572 268h1v1h-1zM583 268h1v1h-1zM594 268h1v1h-1zM605 268h1v1h-1zM615 268h1v1h-1zM626 268h1v1h-1zM637 268h1v1h-1zM648 268h1v1h-1zM659 268h1v1h-1zM669 268h1v1h-1zM680 268h1v1h-1zM691 268h1v1h-1zM0 278h1v1h-1zM11 278h1v1h-1zM22 278h1v1h-1zM33 278h1v1h-1zM43 278h1v1h-1zM54 278h1v1h-1zM65 278h1v1h-1zM76 278h1v1h-1zM87 278h1v1h-1zM97 278h1v1h-1zM108 278h1v1h-1zM119 278h1v1h-1zM130 278h1v1h-1zM141 278h1v1h-1zM151 278h1v1h-1zM162 278h1v1h-1zM173 278h1v1h-1zM184 278h1v1h-1zM195 278h1v1h-1zM205 278h1v1h-1zM216 278h1v1h-1zM227 278h1v1h-1zM238 278h1v1h-1zM248 278h1v1h-1zM259 278h1v1h-1zM270 278h1v1h-1zM281 278h1v1h-1zM292 278h1v1h-1zM302 278h1v1h-1zM313 278h1v1h-1zM324 278h1v1h-1zM335 278h1v1h-1zM346 278h1v1h-1zM356 278h1v1h-1zM367 278h1v1h-1zM378 278h1v1h-1zM389 278h1v1h-1zM400 278h1v1h-1zM410 278h1v1h-1zM421 278h1v1h-1zM432 278h1v1h-1zM443 278h1v1h-1zM453 278h1v1h-1zM464 278h1v1h-1zM475 278h1v1h-1zM486 278h1v1h-1zM497 278h1v1h-1zM507 278h1v1h-1zM518 278h1v1h-1zM529 278h1v1h-1zM540 278h1v1h-1zM551 278h1v1h-1zM561 278h1v1h-1zM572 278h1v1h-1zM583 278h1v1h-1zM594 278h1v1h-1zM605 278h1v1h-1zM615 278h1v1h-1zM626 278h1v1h-1zM637 278h1v1h-1zM648 278h1v1h-1zM659 278h1v1h-1zM669 278h1v1h-1zM680 278h1v1h-1zM691 278h1v1h-1zM0 289h1v1h-1zM11 289h1v1h-1zM22 289h1v1h-1zM33 289h1v1h-1zM43 289h1v1h-1zM54 289h1v1h-1zM65 289h1v1h-1zM76 289h1v1h-1zM87 289h1v1h-1zM97 289h1v1h-1zM108 289h1v1h-1zM119 289h1v1h-1zM130 289h1v1h-1zM141 289h1v1h-1zM151 289h1v1h-1zM162 289h1v1h-1zM173 289h1v1h-1zM184 289h1v1h-1zM195 289h1v1h-1zM205 289h1v1h-1zM216 289h1v1h-1zM227 289h1v1h-1zM238 289h1v1h-1zM248 289h1v1h-1zM259 289h1v1h-1zM270 289h1v1h-1zM281 289h1v1h-1zM292 289h1v1h-1zM302 289h1v1h-1zM313 289h1v1h-1zM324 289h1v1h-1zM335 289h1v1h-1zM346 289h1v1h-1zM356 289h1v1h-1zM367 289h1v1h-1zM378 289h1v1h-1zM389 289h1v1h-1zM400 289h1v1h-1zM410 289h1v1h-1zM421 289h1v1h-1zM432 289h1v1h-1zM443 289h1v1h-1zM453 289h1v1h-1zM464 289h1v1h-1zM475 289h1v1h-1zM486 289h1v1h-1zM497 289h1v1h-1zM507 289h1v1h-1zM518 289h1v1h-1zM529 289h1v1h-1zM540 289h1v1h-1zM551 289h1v1h-1zM561 289h1v1h-1zM572 289h1v1h-1zM583 289h1v1h-1zM594 289h1v1h-1zM605 289h1v1h-1zM615 289h1v1h-1zM626 289h1v1h-1zM637 289h1v1h-1zM648 289h1v1h-1zM659 289h1v1h-1zM669 289h1v1h-1zM680 289h1v1h-1zM691 289h1v1h-1zM0 300h1v1h-1zM11 300h1v1h-1zM22 300h1v1h-1zM33 300h1v1h-1zM43 300h1v1h-1zM54 300h1v1h-1zM65 300h1v1h-1zM76 300h1v1h-1zM87 300h1v1h-1zM97 300h1v1h-1zM108 300h1v1h-1zM119 300h1v1h-1zM130 300h1v1h-1zM141 300h1v1h-1zM151 300h1v1h-1zM162 300h1v1h-1zM173 300h1v1h-1zM184 300h1v1h-1zM195 300h1v1h-1zM205 300h1v1h-1zM216 300h1v1h-1zM227 300h1v1h-1zM238 300h1v1h-1zM248 300h1v1h-1zM259 300h1v1h-1zM270 300h1v1h-1zM281 300h1v1h-1zM292 300h1v1h-1zM302 300h1v1h-1zM313 300h1v1h-1zM324 300h1v1h-1zM335 300h1v1h-1zM346 300h1v1h-1zM356 300h1v1h-1zM367 300h1v1h-1zM378 300h1v1h-1zM389 300h1v1h-1zM400 300h1v1h-1zM410 300h1v1h-1zM421 300h1v1h-1zM432 300h1v1h-1zM443 300h1v1h-1zM453 300h1v1h-1zM464 300h1v1h-1zM475 300h1v1h-1zM486 300h1v1h-1zM497 300h1v1h-1zM507 300h1v1h-1zM518 300h1v1h-1zM529 300h1v1h-1zM540 300h1v1h-1zM551 300h1v1h-1zM561 300h1v1h-1zM572 300h1v1h-1zM583 300h1v1h-1zM594 300h1v1h-1zM605 300h1v1h-1zM615 300h1v1h-1zM626 300h1v1h-1zM637 300h1v1h-1zM648 300h1v1h-1zM659 300h1v1h-1zM669 300h1v1h-1zM680 300h1v1h-1zM691 300h1v1h-1zM0 311h1v1h-1zM11 311h1v1h-1zM22 311h1v1h-1zM33 311h1v1h-1zM43 311h1v1h-1zM54 311h1v1h-1zM65 311h1v1h-1zM76 311h1v1h-1zM87 311h1v1h-1zM97 311h1v1h-1zM108 311h1v1h-1zM119 311h1v1h-1zM130 311h1v1h-1zM141 311h1v1h-1zM151 311h1v1h-1zM162 311h1v1h-1zM173 311h1v1h-1zM184 311h1v1h-1zM195 311h1v1h-1zM205 311h1v1h-1zM216 311h1v1h-1zM227 311h1v1h-1zM238 311h1v1h-1zM248 311h1v1h-1zM259 311h1v1h-1zM270 311h1v1h-1zM281 311h1v1h-1zM292 311h1v1h-1zM302 311h1v1h-1zM313 311h1v1h-1zM324 311h1v1h-1zM335 311h1v1h-1zM346 311h1v1h-1zM356 311h1v1h-1zM367 311h1v1h-1zM378 311h1v1h-1zM389 311h1v1h-1zM400 311h1v1h-1zM410 311h1v1h-1zM421 311h1v1h-1zM432 311h1v1h-1zM443 311h1v1h-1zM453 311h1v1h-1zM464 311h1v1h-1zM475 311h1v1h-1zM486 311h1v1h-1zM497 311h1v1h-1zM507 311h1v1h-1zM518 311h1v1h-1zM529 311h1v1h-1zM540 311h1v1h-1zM551 311h1v1h-1zM561 311h1v1h-1zM572 311h1v1h-1zM583 311h1v1h-1zM594 311h1v1h-1zM605 311h1v1h-1zM615 311h1v1h-1zM626 311h1v1h-1zM637 311h1v1h-1zM648 311h1v1h-1zM659 311h1v1h-1zM669 311h1v1h-1zM680 311h1v1h-1zM691 311h1v1h-1zM0 321h1v1h-1zM11 321h1v1h-1zM22 321h1v1h-1zM33 321h1v1h-1zM43 321h1v1h-1zM54 321h1v1h-1zM65 321h1v1h-1zM76 321h1v1h-1zM87 321h1v1h-1zM97 321h1v1h-1zM108 321h1v1h-1zM119 321h1v1h-1zM130 321h1v1h-1zM141 321h1v1h-1zM151 321h1v1h-1zM162 321h1v1h-1zM173 321h1v1h-1zM184 321h1v1h-1zM195 321h1v1h-1zM205 321h1v1h-1zM216 321h1v1h-1zM227 321h1v1h-1zM238 321h1v1h-1zM248 321h1v1h-1zM259 321h1v1h-1zM270 321h1v1h-1zM281 321h1v1h-1zM292 321h1v1h-1zM302 321h1v1h-1zM313 321h1v1h-1zM324 321h1v1h-1zM335 321h1v1h-1zM346 321h1v1h-1zM356 321h1v1h-1zM367 321h1v1h-1zM378 321h1v1h-1zM389 321h1v1h-1zM400 321h1v1h-1zM410 321h1v1h-1zM421 321h1v1h-1zM432 321h1v1h-1zM443 321h1v1h-1zM453 321h1v1h-1zM464 321h1v1h-1zM475 321h1v1h-1zM486 321h1v1h-1zM497 321h1v1h-1zM507 321h1v1h-1zM518 321h1v1h-1zM529 321h1v1h-1zM540 321h1v1h-1zM551 321h1v1h-1zM561 321h1v1h-1zM572 321h1v1h-1zM583 321h1v1h-1zM594 321h1v1h-1zM605 321h1v1h-1zM615 321h1v1h-1zM626 321h1v1h-1zM637 321h1v1h-1zM648 321h1v1h-1zM659 321h1v1h-1zM669 321h1v1h-1zM680 321h1v1h-1zM691 321h1v1h-1zM0 332h1v1h-1zM11 332h1v1h-1zM22 332h1v1h-1zM33 332h1v1h-1zM43 332h1v1h-1zM54 332h1v1h-1zM65 332h1v1h-1zM76 332h1v1h-1zM87 332h1v1h-1zM97 332h1v1h-1zM108 332h1v1h-1zM119 332h1v1h-1zM130 332h1v1h-1zM141 332h1v1h-1zM151 332h1v1h-1zM162 332h1v1h-1zM173 332h1v1h-1zM184 332h1v1h-1zM195 332h1v1h-1zM205 332h1v1h-1zM216 332h1v1h-1zM227 332h1v1h-1zM238 332h1v1h-1zM248 332h1v1h-1zM259 332h1v1h-1zM270 332h1v1h-1zM281 332h1v1h-1zM292 332h1v1h-1zM302 332h1v1h-1zM313 332h1v1h-1zM324 332h1v1h-1zM335 332h1v1h-1zM346 332h1v1h-1zM356 332h1v1h-1zM367 332h1v1h-1zM378 332h1v1h-1zM389 332h1v1h-1zM400 332h1v1h-1zM410 332h1v1h-1zM421 332h1v1h-1zM432 332h1v1h-1zM443 332h1v1h-1zM453 332h1v1h-1zM464 332h1v1h-1zM475 332h1v1h-1zM486 332h1v1h-1zM497 332h1v1h-1zM507 332h1v1h-1zM518 332h1v1h-1zM529 332h1v1h-1zM540 332h1v1h-1zM551 332h1v1h-1zM561 332h1v1h-1zM572 332h1v1h-1zM583 332h1v1h-1zM594 332h1v1h-1zM605 332h1v1h-1zM615 332h1v1h-1zM626 332h1v1h-1zM637 332h1v1h-1zM648 332h1v1h-1zM659 332h1v1h-1zM669 332h1v1h-1zM680 332h1v1h-1zM691 332h1v1h-1zM0 343h1v1h-1zM11 343h1v1h-1zM22 343h1v1h-1zM33 343h1v1h-1zM43 343h1v1h-1zM54 343h1v1h-1zM65 343h1v1h-1zM76 343h1v1h-1zM87 343h1v1h-1zM97 343h1v1h-1zM108 343h1v1h-1zM119 343h1v1h-1zM130 343h1v1h-1zM141 343h1v1h-1zM151 343h1v1h-1zM162 343h1v1h-1zM173 343h1v1h-1zM184 343h1v1h-1zM195 343h1v1h-1zM205 343h1v1h-1zM216 343h1v1h-1zM227 343h1v1h-1zM238 343h1v1h-1zM248 343h1v1h-1zM259 343h1v1h-1zM270 343h1v1h-1zM281 343h1v1h-1zM292 343h1v1h-1zM302 343h1v1h-1zM313 343h1v1h-1zM324 343h1v1h-1zM335 343h1v1h-1zM346 343h1v1h-1zM356 343h1v1h-1zM367 343h1v1h-1zM378 343h1v1h-1zM389 343h1v1h-1zM400 343h1v1h-1zM410 343h1v1h-1zM421 343h1v1h-1zM432 343h1v1h-1zM443 343h1v1h-1zM453 343h1v1h-1zM464 343h1v1h-1zM475 343h1v1h-1zM486 343h1v1h-1zM497 343h1v1h-1zM507 343h1v1h-1zM518 343h1v1h-1zM529 343h1v1h-1zM540 343h1v1h-1zM551 343h1v1h-1zM561 343h1v1h-1zM572 343h1v1h-1zM583 343h1v1h-1zM594 343h1v1h-1zM605 343h1v1h-1zM615 343h1v1h-1zM626 343h1v1h-1zM637 343h1v1h-1zM648 343h1v1h-1zM659 343h1v1h-1zM669 343h1v1h-1zM680 343h1v1h-1zM691 343h1v1h-1zM0 354h1v1h-1zM11 354h1v1h-1zM22 354h1v1h-1zM33 354h1v1h-1zM43 354h1v1h-1zM54 354h1v1h-1zM65 354h1v1h-1zM76 354h1v1h-1zM87 354h1v1h-1zM97 354h1v1h-1zM108 354h1v1h-1zM119 354h1v1h-1zM130 354h1v1h-1zM141 354h1v1h-1zM151 354h1v1h-1zM162 354h1v1h-1zM173 354h1v1h-1zM184 354h1v1h-1zM195 354h1v1h-1zM205 354h1v1h-1zM216 354h1v1h-1zM227 354h1v1h-1zM238 354h1v1h-1zM248 354h1v1h-1zM259 354h1v1h-1zM270 354h1v1h-1zM281 354h1v1h-1zM292 354h1v1h-1zM302 354h1v1h-1zM313 354h1v1h-1zM324 354h1v1h-1zM335 354h1v1h-1zM346 354h1v1h-1zM356 354h1v1h-1zM367 354h1v1h-1zM378 354h1v1h-1zM389 354h1v1h-1zM400 354h1v1h-1zM410 354h1v1h-1zM421 354h1v1h-1zM432 354h1v1h-1zM443 354h1v1h-1zM453 354h1v1h-1zM464 354h1v1h-1zM475 354h1v1h-1zM486 354h1v1h-1zM497 354h1v1h-1zM507 354h1v1h-1zM518 354h1v1h-1zM529 354h1v1h-1zM540 354h1v1h-1zM551 354h1v1h-1zM561 354h1v1h-1zM572 354h1v1h-1zM583 354h1v1h-1zM594 354h1v1h-1zM605 354h1v1h-1zM615 354h1v1h-1zM626 354h1v1h-1zM637 354h1v1h-1zM648 354h1v1h-1zM659 354h1v1h-1zM669 354h1v1h-1zM680 354h1v1h-1zM691 354h1v1h-1zM0 365h1v1h-1zM11 365h1v1h-1zM22 365h1v1h-1zM33 365h1v1h-1zM43 365h1v1h-1zM54 365h1v1h-1zM65 365h1v1h-1zM76 365h1v1h-1zM87 365h1v1h-1zM97 365h1v1h-1zM108 365h1v1h-1zM119 365h1v1h-1zM130 365h1v1h-1zM141 365h1v1h-1zM151 365h1v1h-1zM162 365h1v1h-1zM173 365h1v1h-1zM184 365h1v1h-1zM195 365h1v1h-1zM205 365h1v1h-1zM216 365h1v1h-1zM227 365h1v1h-1zM238 365h1v1h-1zM248 365h1v1h-1zM259 365h1v1h-1zM270 365h1v1h-1zM281 365h1v1h-1zM292 365h1v1h-1zM302 365h1v1h-1zM313 365h1v1h-1zM324 365h1v1h-1zM335 365h1v1h-1zM346 365h1v1h-1zM356 365h1v1h-1zM367 365h1v1h-1zM378 365h1v1h-1zM389 365h1v1h-1zM400 365h1v1h-1zM410 365h1v1h-1zM421 365h1v1h-1zM432 365h1v1h-1zM443 365h1v1h-1zM453 365h1v1h-1zM464 365h1v1h-1zM475 365h1v1h-1zM486 365h1v1h-1zM497 365h1v1h-1zM507 365h1v1h-1zM518 365h1v1h-1zM529 365h1v1h-1zM540 365h1v1h-1zM551 365h1v1h-1zM561 365h1v1h-1zM572 365h1v1h-1zM583 365h1v1h-1zM594 365h1v1h-1zM605 365h1v1h-1zM615 365h1v1h-1zM626 365h1v1h-1zM637 365h1v1h-1zM648 365h1v1h-1zM659 365h1v1h-1zM669 365h1v1h-1zM680 365h1v1h-1zM691 365h1v1h-1zM0 375h1v1h-1zM11 375h1v1h-1zM22 375h1v1h-1zM33 375h1v1h-1zM43 375h1v1h-1zM54 375h1v1h-1zM65 375h1v1h-1zM76 375h1v1h-1zM87 375h1v1h-1zM97 375h1v1h-1zM108 375h1v1h-1zM119 375h1v1h-1zM130 375h1v1h-1zM141 375h1v1h-1zM151 375h1v1h-1zM162 375h1v1h-1zM173 375h1v1h-1zM184 375h1v1h-1zM195 375h1v1h-1zM205 375h1v1h-1zM216 375h1v1h-1zM227 375h1v1h-1zM238 375h1v1h-1zM248 375h1v1h-1zM259 375h1v1h-1zM270 375h1v1h-1zM281 375h1v1h-1zM292 375h1v1h-1zM302 375h1v1h-1zM313 375h1v1h-1zM324 375h1v1h-1zM335 375h1v1h-1zM346 375h1v1h-1zM356 375h1v1h-1zM367 375h1v1h-1zM378 375h1v1h-1zM389 375h1v1h-1zM400 375h1v1h-1zM410 375h1v1h-1zM421 375h1v1h-1zM432 375h1v1h-1zM443 375h1v1h-1zM453 375h1v1h-1zM464 375h1v1h-1zM475 375h1v1h-1zM486 375h1v1h-1zM497 375h1v1h-1zM507 375h1v1h-1zM518 375h1v1h-1zM529 375h1v1h-1zM540 375h1v1h-1zM551 375h1v1h-1zM561 375h1v1h-1zM572 375h1v1h-1zM583 375h1v1h-1zM594 375h1v1h-1zM605 375h1v1h-1zM615 375h1v1h-1zM626 375h1v1h-1zM637 375h1v1h-1zM648 375h1v1h-1zM659 375h1v1h-1zM669 375h1v1h-1zM680 375h1v1h-1zM691 375h1v1h-1zM0 386h1v1h-1zM11 386h1v1h-1zM22 386h1v1h-1zM33 386h1v1h-1zM43 386h1v1h-1zM54 386h1v1h-1zM65 386h1v1h-1zM76 386h1v1h-1zM87 386h1v1h-1zM97 386h1v1h-1zM108 386h1v1h-1zM119 386h1v1h-1zM130 386h1v1h-1zM141 386h1v1h-1zM151 386h1v1h-1zM162 386h1v1h-1zM173 386h1v1h-1zM184 386h1v1h-1zM195 386h1v1h-1zM205 386h1v1h-1zM216 386h1v1h-1zM227 386h1v1h-1zM238 386h1v1h-1zM248 386h1v1h-1zM259 386h1v1h-1zM270 386h1v1h-1zM281 386h1v1h-1zM292 386h1v1h-1zM302 386h1v1h-1zM313 386h1v1h-1zM324 386h1v1h-1zM335 386h1v1h-1zM346 386h1v1h-1zM356 386h1v1h-1zM367 386h1v1h-1zM378 386h1v1h-1zM389 386h1v1h-1zM400 386h1v1h-1zM410 386h1v1h-1zM421 386h1v1h-1zM432 386h1v1h-1zM443 386h1v1h-1zM453 386h1v1h-1zM464 386h1v1h-1zM475 386h1v1h-1zM486 386h1v1h-1zM497 386h1v1h-1zM507 386h1v1h-1zM518 386h1v1h-1zM529 386h1v1h-1zM540 386h1v1h-1zM551 386h1v1h-1zM561 386h1v1h-1zM572 386h1v1h-1zM583 386h1v1h-1zM594 386h1v1h-1zM605 386h1v1h-1zM615 386h1v1h-1zM626 386h1v1h-1zM637 386h1v1h-1zM648 386h1v1h-1zM659 386h1v1h-1zM669 386h1v1h-1zM680 386h1v1h-1zM691 386h1v1h-1zM0 397h1v1h-1zM11 397h1v1h-1zM22 397h1v1h-1zM33 397h1v1h-1zM43 397h1v1h-1zM54 397h1v1h-1zM65 397h1v1h-1zM76 397h1v1h-1zM87 397h1v1h-1zM97 397h1v1h-1zM108 397h1v1h-1zM119 397h1v1h-1zM130 397h1v1h-1zM141 397h1v1h-1zM151 397h1v1h-1zM162 397h1v1h-1zM173 397h1v1h-1zM184 397h1v1h-1zM195 397h1v1h-1zM205 397h1v1h-1zM216 397h1v1h-1zM227 397h1v1h-1zM238 397h1v1h-1zM248 397h1v1h-1zM259 397h1v1h-1zM270 397h1v1h-1zM281 397h1v1h-1zM292 397h1v1h-1zM302 397h1v1h-1zM313 397h1v1h-1zM324 397h1v1h-1zM335 397h1v1h-1zM346 397h1v1h-1zM356 397h1v1h-1zM367 397h1v1h-1zM378 397h1v1h-1zM389 397h1v1h-1zM400 397h1v1h-1zM410 397h1v1h-1zM421 397h1v1h-1zM432 397h1v1h-1zM443 397h1v1h-1zM453 397h1v1h-1zM464 397h1v1h-1zM475 397h1v1h-1zM486 397h1v1h-1zM497 397h1v1h-1zM507 397h1v1h-1zM518 397h1v1h-1zM529 397h1v1h-1zM540 397h1v1h-1zM551 397h1v1h-1zM561 397h1v1h-1zM572 397h1v1h-1zM583 397h1v1h-1zM594 397h1v1h-1zM605 397h1v1h-1zM615 397h1v1h-1zM626 397h1v1h-1zM637 397h1v1h-1zM648 397h1v1h-1zM659 397h1v1h-1zM669 397h1v1h-1zM680 397h1v1h-1zM691 397h1v1h-1zM0 408h1v1h-1zM11 408h1v1h-1zM22 408h1v1h-1zM33 408h1v1h-1zM43 408h1v1h-1zM54 408h1v1h-1zM65 408h1v1h-1zM76 408h1v1h-1zM87 408h1v1h-1zM97 408h1v1h-1zM108 408h1v1h-1zM119 408h1v1h-1zM130 408h1v1h-1zM141 408h1v1h-1zM151 408h1v1h-1zM162 408h1v1h-1zM173 408h1v1h-1zM184 408h1v1h-1zM195 408h1v1h-1zM205 408h1v1h-1zM216 408h1v1h-1zM227 408h1v1h-1zM238 408h1v1h-1zM248 408h1v1h-1zM259 408h1v1h-1zM270 408h1v1h-1zM281 408h1v1h-1zM292 408h1v1h-1zM302 408h1v1h-1zM313 408h1v1h-1zM324 408h1v1h-1zM335 408h1v1h-1zM346 408h1v1h-1zM356 408h1v1h-1zM367 408h1v1h-1zM378 408h1v1h-1zM389 408h1v1h-1zM400 408h1v1h-1zM410 408h1v1h-1zM421 408h1v1h-1zM432 408h1v1h-1zM443 408h1v1h-1zM453 408h1v1h-1zM464 408h1v1h-1zM475 408h1v1h-1zM486 408h1v1h-1zM497 408h1v1h-1zM507 408h1v1h-1zM518 408h1v1h-1zM529 408h1v1h-1zM540 408h1v1h-1zM551 408h1v1h-1zM561 408h1v1h-1zM572 408h1v1h-1zM583 408h1v1h-1zM594 408h1v1h-1zM605 408h1v1h-1zM615 408h1v1h-1zM626 408h1v1h-1zM637 408h1v1h-1zM648 408h1v1h-1zM659 408h1v1h-1zM669 408h1v1h-1zM680 408h1v1h-1zM691 408h1v1h-1zM0 419h1v1h-1zM11 419h1v1h-1zM22 419h1v1h-1zM33 419h1v1h-1zM43 419h1v1h-1zM54 419h1v1h-1zM65 419h1v1h-1zM76 419h1v1h-1zM87 419h1v1h-1zM97 419h1v1h-1zM108 419h1v1h-1zM119 419h1v1h-1zM130 419h1v1h-1zM141 419h1v1h-1zM151 419h1v1h-1zM162 419h1v1h-1zM173 419h1v1h-1zM184 419h1v1h-1zM195 419h1v1h-1zM205 419h1v1h-1zM216 419h1v1h-1zM227 419h1v1h-1zM238 419h1v1h-1zM248 419h1v1h-1zM259 419h1v1h-1zM270 419h1v1h-1zM281 419h1v1h-1zM292 419h1v1h-1zM302 419h1v1h-1zM313 419h1v1h-1zM324 419h1v1h-1zM335 419h1v1h-1zM346 419h1v1h-1zM356 419h1v1h-1zM367 419h1v1h-1zM378 419h1v1h-1zM389 419h1v1h-1zM400 419h1v1h-1zM410 419h1v1h-1zM421 419h1v1h-1zM432 419h1v1h-1zM443 419h1v1h-1zM453 419h1v1h-1zM464 419h1v1h-1zM475 419h1v1h-1zM486 419h1v1h-1zM497 419h1v1h-1zM507 419h1v1h-1zM518 419h1v1h-1zM529 419h1v1h-1zM540 419h1v1h-1zM551 419h1v1h-1zM561 419h1v1h-1zM572 419h1v1h-1zM583 419h1v1h-1zM594 419h1v1h-1zM605 419h1v1h-1zM615 419h1v1h-1zM626 419h1v1h-1zM637 419h1v1h-1zM648 419h1v1h-1zM659 419h1v1h-1zM669 419h1v1h-1zM680 419h1v1h-1zM691 419h1v1h-1zM0 429h1v1h-1zM11 429h1v1h-1zM22 429h1v1h-1zM33 429h1v1h-1zM43 429h1v1h-1zM54 429h1v1h-1zM65 429h1v1h-1zM76 429h1v1h-1zM87 429h1v1h-1zM97 429h1v1h-1zM108 429h1v1h-1zM119 429h1v1h-1zM130 429h1v1h-1zM141 429h1v1h-1zM151 429h1v1h-1zM162 429h1v1h-1zM173 429h1v1h-1zM184 429h1v1h-1zM195 429h1v1h-1zM205 429h1v1h-1zM216 429h1v1h-1zM227 429h1v1h-1zM238 429h1v1h-1zM248 429h1v1h-1zM259 429h1v1h-1zM270 429h1v1h-1zM281 429h1v1h-1zM292 429h1v1h-1zM302 429h1v1h-1zM313 429h1v1h-1zM324 429h1v1h-1zM335 429h1v1h-1zM346 429h1v1h-1zM356 429h1v1h-1zM367 429h1v1h-1zM378 429h1v1h-1zM389 429h1v1h-1zM400 429h1v1h-1zM410 429h1v1h-1zM421 429h1v1h-1zM432 429h1v1h-1zM443 429h1v1h-1zM453 429h1v1h-1zM464 429h1v1h-1zM475 429h1v1h-1zM486 429h1v1h-1zM497 429h1v1h-1zM507 429h1v1h-1zM518 429h1v1h-1zM529 429h1v1h-1zM540 429h1v1h-1zM551 429h1v1h-1zM561 429h1v1h-1zM572 429h1v1h-1zM583 429h1v1h-1zM594 429h1v1h-1zM605 429h1v1h-1zM615 429h1v1h-1zM626 429h1v1h-1zM637 429h1v1h-1zM648 429h1v1h-1zM659 429h1v1h-1zM669 429h1v1h-1zM680 429h1v1h-1zM691 429h1v1h-1zM0 440h1v1h-1zM11 440h1v1h-1zM22 440h1v1h-1zM33 440h1v1h-1zM43 440h1v1h-1zM54 440h1v1h-1zM65 440h1v1h-1zM76 440h1v1h-1zM87 440h1v1h-1zM97 440h1v1h-1zM108 440h1v1h-1zM119 440h1v1h-1zM130 440h1v1h-1zM141 440h1v1h-1zM151 440h1v1h-1zM162 440h1v1h-1zM173 440h1v1h-1zM184 440h1v1h-1zM195 440h1v1h-1zM205 440h1v1h-1zM216 440h1v1h-1zM227 440h1v1h-1zM238 440h1v1h-1zM248 440h1v1h-1zM259 440h1v1h-1zM270 440h1v1h-1zM281 440h1v1h-1zM292 440h1v1h-1zM302 440h1v1h-1zM313 440h1v1h-1zM324 440h1v1h-1zM335 440h1v1h-1zM346 440h1v1h-1zM356 440h1v1h-1zM367 440h1v1h-1zM378 440h1v1h-1zM389 440h1v1h-1zM400 440h1v1h-1zM410 440h1v1h-1zM421 440h1v1h-1zM432 440h1v1h-1zM443 440h1v1h-1zM453 440h1v1h-1zM464 440h1v1h-1zM475 440h1v1h-1zM486 440h1v1h-1zM497 440h1v1h-1zM507 440h1v1h-1zM518 440h1v1h-1zM529 440h1v1h-1zM540 440h1v1h-1zM551 440h1v1h-1zM561 440h1v1h-1zM572 440h1v1h-1zM583 440h1v1h-1zM594 440h1v1h-1zM605 440h1v1h-1zM615 440h1v1h-1zM626 440h1v1h-1zM637 440h1v1h-1zM648 440h1v1h-1zM659 440h1v1h-1zM669 440h1v1h-1zM680 440h1v1h-1zM691 440h1v1h-1zM0 451h1v1h-1zM11 451h1v1h-1zM22 451h1v1h-1zM33 451h1v1h-1zM43 451h1v1h-1zM54 451h1v1h-1zM65 451h1v1h-1zM76 451h1v1h-1zM87 451h1v1h-1zM97 451h1v1h-1zM108 451h1v1h-1zM119 451h1v1h-1zM130 451h1v1h-1zM141 451h1v1h-1zM151 451h1v1h-1zM162 451h1v1h-1zM173 451h1v1h-1zM184 451h1v1h-1zM195 451h1v1h-1zM205 451h1v1h-1zM216 451h1v1h-1zM227 451h1v1h-1zM238 451h1v1h-1zM248 451h1v1h-1zM259 451h1v1h-1zM270 451h1v1h-1zM281 451h1v1h-1zM292 451h1v1h-1zM302 451h1v1h-1zM313 451h1v1h-1zM324 451h1v1h-1zM335 451h1v1h-1zM346 451h1v1h-1zM356 451h1v1h-1zM367 451h1v1h-1zM378 451h1v1h-1zM389 451h1v1h-1zM400 451h1v1h-1zM410 451h1v1h-1zM421 451h1v1h-1zM432 451h1v1h-1zM443 451h1v1h-1zM453 451h1v1h-1zM464 451h1v1h-1zM475 451h1v1h-1zM486 451h1v1h-1zM497 451h1v1h-1zM507 451h1v1h-1zM518 451h1v1h-1zM529 451h1v1h-1zM540 451h1v1h-1zM551 451h1v1h-1zM561 451h1v1h-1zM572 451h1v1h-1zM583 451h1v1h-1zM594 451h1v1h-1zM605 451h1v1h-1zM615 451h1v1h-1zM626 451h1v1h-1zM637 451h1v1h-1zM648 451h1v1h-1zM659 451h1v1h-1zM669 451h1v1h-1zM680 451h1v1h-1zM691 451h1v1h-1zM0 462h1v1h-1zM11 462h1v1h-1zM22 462h1v1h-1zM33 462h1v1h-1zM43 462h1v1h-1zM54 462h1v1h-1zM65 462h1v1h-1zM76 462h1v1h-1zM87 462h1v1h-1zM97 462h1v1h-1zM108 462h1v1h-1zM119 462h1v1h-1zM130 462h1v1h-1zM141 462h1v1h-1zM151 462h1v1h-1zM162 462h1v1h-1zM173 462h1v1h-1zM184 462h1v1h-1zM195 462h1v1h-1zM205 462h1v1h-1zM216 462h1v1h-1zM227 462h1v1h-1zM238 462h1v1h-1zM248 462h1v1h-1zM259 462h1v1h-1zM270 462h1v1h-1zM281 462h1v1h-1zM292 462h1v1h-1zM302 462h1v1h-1zM313 462h1v1h-1zM324 462h1v1h-1zM335 462h1v1h-1zM346 462h1v1h-1zM356 462h1v1h-1zM367 462h1v1h-1zM378 462h1v1h-1zM389 462h1v1h-1zM400 462h1v1h-1zM410 462h1v1h-1zM421 462h1v1h-1zM432 462h1v1h-1zM443 462h1v1h-1zM453 462h1v1h-1zM464 462h1v1h-1zM475 462h1v1h-1zM486 462h1v1h-1zM497 462h1v1h-1zM507 462h1v1h-1zM518 462h1v1h-1zM529 462h1v1h-1zM540 462h1v1h-1zM551 462h1v1h-1zM561 462h1v1h-1zM572 462h1v1h-1zM583 462h1v1h-1zM594 462h1v1h-1zM605 462h1v1h-1zM615 462h1v1h-1zM626 462h1v1h-1zM637 462h1v1h-1zM648 462h1v1h-1zM659 462h1v1h-1zM669 462h1v1h-1zM680 462h1v1h-1zM691 462h1v1h-1zM0 472h1v1h-1zM11 472h1v1h-1zM22 472h1v1h-1zM33 472h1v1h-1zM43 472h1v1h-1zM54 472h1v1h-1zM65 472h1v1h-1zM76 472h1v1h-1zM87 472h1v1h-1zM97 472h1v1h-1zM108 472h1v1h-1zM119 472h1v1h-1zM130 472h1v1h-1zM141 472h1v1h-1zM151 472h1v1h-1zM162 472h1v1h-1zM173 472h1v1h-1zM184 472h1v1h-1zM195 472h1v1h-1zM205 472h1v1h-1zM216 472h1v1h-1zM227 472h1v1h-1zM238 472h1v1h-1zM248 472h1v1h-1zM259 472h1v1h-1zM270 472h1v1h-1zM281 472h1v1h-1zM292 472h1v1h-1zM302 472h1v1h-1zM313 472h1v1h-1zM324 472h1v1h-1zM335 472h1v1h-1zM346 472h1v1h-1zM356 472h1v1h-1zM367 472h1v1h-1zM378 472h1v1h-1zM389 472h1v1h-1zM400 472h1v1h-1zM410 472h1v1h-1zM421 472h1v1h-1zM432 472h1v1h-1zM443 472h1v1h-1zM453 472h1v1h-1zM464 472h1v1h-1zM475 472h1v1h-1zM486 472h1v1h-1zM497 472h1v1h-1zM507 472h1v1h-1zM518 472h1v1h-1zM529 472h1v1h-1zM540 472h1v1h-1zM551 472h1v1h-1zM561 472h1v1h-1zM572 472h1v1h-1zM583 472h1v1h-1zM594 472h1v1h-1zM605 472h1v1h-1zM615 472h1v1h-1zM626 472h1v1h-1zM637 472h1v1h-1zM648 472h1v1h-1zM659 472h1v1h-1zM669 472h1v1h-1zM680 472h1v1h-1zM691 472h1v1h-1zM0 483h1v1h-1zM11 483h1v1h-1zM22 483h1v1h-1zM33 483h1v1h-1zM43 483h1v1h-1zM54 483h1v1h-1zM65 483h1v1h-1zM76 483h1v1h-1zM87 483h1v1h-1zM97 483h1v1h-1zM108 483h1v1h-1zM119 483h1v1h-1zM130 483h1v1h-1zM141 483h1v1h-1zM151 483h1v1h-1zM162 483h1v1h-1zM173 483h1v1h-1zM184 483h1v1h-1zM195 483h1v1h-1zM205 483h1v1h-1zM216 483h1v1h-1zM227 483h1v1h-1zM238 483h1v1h-1zM248 483h1v1h-1zM259 483h1v1h-1zM270 483h1v1h-1zM281 483h1v1h-1zM292 483h1v1h-1zM302 483h1v1h-1zM313 483h1v1h-1zM324 483h1v1h-1zM335 483h1v1h-1zM346 483h1v1h-1zM356 483h1v1h-1zM367 483h1v1h-1zM378 483h1v1h-1zM389 483h1v1h-1zM400 483h1v1h-1zM410 483h1v1h-1zM421 483h1v1h-1zM432 483h1v1h-1zM443 483h1v1h-1zM453 483h1v1h-1zM464 483h1v1h-1zM475 483h1v1h-1zM486 483h1v1h-1zM497 483h1v1h-1zM507 483h1v1h-1zM518 483h1v1h-1zM529 483h1v1h-1zM540 483h1v1h-1zM551 483h1v1h-1zM561 483h1v1h-1zM572 483h1v1h-1zM583 483h1v1h-1zM594 483h1v1h-1zM605 483h1v1h-1zM615 483h1v1h-1zM626 483h1v1h-1zM637 483h1v1h-1zM648 483h1v1h-1zM659 483h1v1h-1zM669 483h1v1h-1zM680 483h1v1h-1zM691 483h1v1h-1zM0 494h1v1h-1zM11 494h1v1h-1zM22 494h1v1h-1zM33 494h1v1h-1zM43 494h1v1h-1zM54 494h1v1h-1zM65 494h1v1h-1zM76 494h1v1h-1zM87 494h1v1h-1zM97 494h1v1h-1zM108 494h1v1h-1zM119 494h1v1h-1zM130 494h1v1h-1zM141 494h1v1h-1zM151 494h1v1h-1zM162 494h1v1h-1zM173 494h1v1h-1zM184 494h1v1h-1zM195 494h1v1h-1zM205 494h1v1h-1zM216 494h1v1h-1zM227 494h1v1h-1zM238 494h1v1h-1zM248 494h1v1h-1zM259 494h1v1h-1zM270 494h1v1h-1zM281 494h1v1h-1zM292 494h1v1h-1zM302 494h1v1h-1zM313 494h1v1h-1zM324 494h1v1h-1zM335 494h1v1h-1zM346 494h1v1h-1zM356 494h1v1h-1zM367 494h1v1h-1zM378 494h1v1h-1zM389 494h1v1h-1zM400 494h1v1h-1zM410 494h1v1h-1zM421 494h1v1h-1zM432 494h1v1h-1zM443 494h1v1h-1zM453 494h1v1h-1zM464 494h1v1h-1zM475 494h1v1h-1zM486 494h1v1h-1zM497 494h1v1h-1zM507 494h1v1h-1zM518 494h1v1h-1zM529 494h1v1h-1zM540 494h1v1h-1zM551 494h1v1h-1zM561 494h1v1h-1zM572 494h1v1h-1zM583 494h1v1h-1zM594 494h1v1h-1zM605 494h1v1h-1zM615 494h1v1h-1zM626 494h1v1h-1zM637 494h1v1h-1zM648 494h1v1h-1zM659 494h1v1h-1zM669 494h1v1h-1zM680 494h1v1h-1zM691 494h1v1h-1zM0 505h1v1h-1zM11 505h1v1h-1zM22 505h1v1h-1zM33 505h1v1h-1zM43 505h1v1h-1zM54 505h1v1h-1zM65 505h1v1h-1zM76 505h1v1h-1zM87 505h1v1h-1zM97 505h1v1h-1zM108 505h1v1h-1zM119 505h1v1h-1zM130 505h1v1h-1zM141 505h1v1h-1zM151 505h1v1h-1zM162 505h1v1h-1zM173 505h1v1h-1zM184 505h1v1h-1zM195 505h1v1h-1zM205 505h1v1h-1zM216 505h1v1h-1zM227 505h1v1h-1zM238 505h1v1h-1zM248 505h1v1h-1zM259 505h1v1h-1zM270 505h1v1h-1zM281 505h1v1h-1zM292 505h1v1h-1zM302 505h1v1h-1zM313 505h1v1h-1zM324 505h1v1h-1zM335 505h1v1h-1zM346 505h1v1h-1zM356 505h1v1h-1zM367 505h1v1h-1zM378 505h1v1h-1zM389 505h1v1h-1zM400 505h1v1h-1zM410 505h1v1h-1zM421 505h1v1h-1zM432 505h1v1h-1zM443 505h1v1h-1zM453 505h1v1h-1zM464 505h1v1h-1zM475 505h1v1h-1zM486 505h1v1h-1zM497 505h1v1h-1zM507 505h1v1h-1zM518 505h1v1h-1zM529 505h1v1h-1zM540 505h1v1h-1zM551 505h1v1h-1zM561 505h1v1h-1zM572 505h1v1h-1zM583 505h1v1h-1zM594 505h1v1h-1zM605 505h1v1h-1zM615 505h1v1h-1zM626 505h1v1h-1zM637 505h1v1h-1zM648 505h1v1h-1zM659 505h1v1h-1zM669 505h1v1h-1zM680 505h1v1h-1zM691 505h1v1h-1zM0 516h1v1h-1zM11 516h1v1h-1zM22 516h1v1h-1zM33 516h1v1h-1zM43 516h1v1h-1zM54 516h1v1h-1zM65 516h1v1h-1zM76 516h1v1h-1zM87 516h1v1h-1zM97 516h1v1h-1zM108 516h1v1h-1zM119 516h1v1h-1zM130 516h1v1h-1zM141 516h1v1h-1zM151 516h1v1h-1zM162 516h1v1h-1zM173 516h1v1h-1zM184 516h1v1h-1zM195 516h1v1h-1zM205 516h1v1h-1zM216 516h1v1h-1zM227 516h1v1h-1zM238 516h1v1h-1zM248 516h1v1h-1zM259 516h1v1h-1zM270 516h1v1h-1zM281 516h1v1h-1zM292 516h1v1h-1zM302 516h1v1h-1zM313 516h1v1h-1zM324 516h1v1h-1zM335 516h1v1h-1zM346 516h1v1h-1zM356 516h1v1h-1zM367 516h1v1h-1zM378 516h1v1h-1zM389 516h1v1h-1zM400 516h1v1h-1zM410 516h1v1h-1zM421 516h1v1h-1zM432 516h1v1h-1zM443 516h1v1h-1zM453 516h1v1h-1zM464 516h1v1h-1zM475 516h1v1h-1zM486 516h1v1h-1zM497 516h1v1h-1zM507 516h1v1h-1zM518 516h1v1h-1zM529 516h1v1h-1zM540 516h1v1h-1zM551 516h1v1h-1zM561 516h1v1h-1zM572 516h1v1h-1zM583 516h1v1h-1zM594 516h1v1h-1zM605 516h1v1h-1zM615 516h1v1h-1zM626 516h1v1h-1zM637 516h1v1h-1zM648 516h1v1h-1zM659 516h1v1h-1zM669 516h1v1h-1zM680 516h1v1h-1zM691 516h1v1h-1zM0 526h1v1h-1zM11 526h1v1h-1zM22 526h1v1h-1zM33 526h1v1h-1zM43 526h1v1h-1zM54 526h1v1h-1zM65 526h1v1h-1zM76 526h1v1h-1zM87 526h1v1h-1zM97 526h1v1h-1zM108 526h1v1h-1zM119 526h1v1h-1zM130 526h1v1h-1zM141 526h1v1h-1zM151 526h1v1h-1zM162 526h1v1h-1zM173 526h1v1h-1zM184 526h1v1h-1zM195 526h1v1h-1zM205 526h1v1h-1zM216 526h1v1h-1zM227 526h1v1h-1zM238 526h1v1h-1zM248 526h1v1h-1zM259 526h1v1h-1zM270 526h1v1h-1zM281 526h1v1h-1zM292 526h1v1h-1zM302 526h1v1h-1zM313 526h1v1h-1zM324 526h1v1h-1zM335 526h1v1h-1zM346 526h1v1h-1zM356 526h1v1h-1zM367 526h1v1h-1zM378 526h1v1h-1zM389 526h1v1h-1zM400 526h1v1h-1zM410 526h1v1h-1zM421 526h1v1h-1zM432 526h1v1h-1zM443 526h1v1h-1zM453 526h1v1h-1zM464 526h1v1h-1zM475 526h1v1h-1zM486 526h1v1h-1zM497 526h1v1h-1zM507 526h1v1h-1zM518 526h1v1h-1zM529 526h1v1h-1zM540 526h1v1h-1zM551 526h1v1h-1zM561 526h1v1h-1zM572 526h1v1h-1zM583 526h1v1h-1zM594 526h1v1h-1zM605 526h1v1h-1zM615 526h1v1h-1zM626 526h1v1h-1zM637 526h1v1h-1zM648 526h1v1h-1zM659 526h1v1h-1zM669 526h1v1h-1zM680 526h1v1h-1zM691 526h1v1h-1zM0 537h1v1h-1zM11 537h1v1h-1zM22 537h1v1h-1zM33 537h1v1h-1zM43 537h1v1h-1zM54 537h1v1h-1zM65 537h1v1h-1zM76 537h1v1h-1zM87 537h1v1h-1zM97 537h1v1h-1zM108 537h1v1h-1zM119 537h1v1h-1zM130 537h1v1h-1zM141 537h1v1h-1zM151 537h1v1h-1zM162 537h1v1h-1zM173 537h1v1h-1zM184 537h1v1h-1zM195 537h1v1h-1zM205 537h1v1h-1zM216 537h1v1h-1zM227 537h1v1h-1zM238 537h1v1h-1zM248 537h1v1h-1zM259 537h1v1h-1zM270 537h1v1h-1zM281 537h1v1h-1zM292 537h1v1h-1zM302 537h1v1h-1zM313 537h1v1h-1zM324 537h1v1h-1zM335 537h1v1h-1zM346 537h1v1h-1zM356 537h1v1h-1zM367 537h1v1h-1zM378 537h1v1h-1zM389 537h1v1h-1zM400 537h1v1h-1zM410 537h1v1h-1zM421 537h1v1h-1zM432 537h1v1h-1zM443 537h1v1h-1zM453 537h1v1h-1zM464 537h1v1h-1zM475 537h1v1h-1zM486 537h1v1h-1zM497 537h1v1h-1zM507 537h1v1h-1zM518 537h1v1h-1zM529 537h1v1h-1zM540 537h1v1h-1zM551 537h1v1h-1zM561 537h1v1h-1zM572 537h1v1h-1zM583 537h1v1h-1zM594 537h1v1h-1zM605 537h1v1h-1zM615 537h1v1h-1zM626 537h1v1h-1zM637 537h1v1h-1zM648 537h1v1h-1zM659 537h1v1h-1zM669 537h1v1h-1zM680 537h1v1h-1zM691 537h1v1h-1zM0 548h1v1h-1zM11 548h1v1h-1zM22 548h1v1h-1zM33 548h1v1h-1zM43 548h1v1h-1zM54 548h1v1h-1zM65 548h1v1h-1zM76 548h1v1h-1zM87 548h1v1h-1zM97 548h1v1h-1zM108 548h1v1h-1zM119 548h1v1h-1zM130 548h1v1h-1zM141 548h1v1h-1zM151 548h1v1h-1zM162 548h1v1h-1zM173 548h1v1h-1zM184 548h1v1h-1zM195 548h1v1h-1zM205 548h1v1h-1zM216 548h1v1h-1zM227 548h1v1h-1zM238 548h1v1h-1zM248 548h1v1h-1zM259 548h1v1h-1zM270 548h1v1h-1zM281 548h1v1h-1zM292 548h1v1h-1zM302 548h1v1h-1zM313 548h1v1h-1zM324 548h1v1h-1zM335 548h1v1h-1zM346 548h1v1h-1zM356 548h1v1h-1zM367 548h1v1h-1zM378 548h1v1h-1zM389 548h1v1h-1zM400 548h1v1h-1zM410 548h1v1h-1zM421 548h1v1h-1zM432 548h1v1h-1zM443 548h1v1h-1zM453 548h1v1h-1zM464 548h1v1h-1zM475 548h1v1h-1zM486 548h1v1h-1zM497 548h1v1h-1zM507 548h1v1h-1zM518 548h1v1h-1zM529 548h1v1h-1zM540 548h1v1h-1zM551 548h1v1h-1zM561 548h1v1h-1zM572 548h1v1h-1zM583 548h1v1h-1zM594 548h1v1h-1zM605 548h1v1h-1zM615 548h1v1h-1zM626 548h1v1h-1zM637 548h1v1h-1zM648 548h1v1h-1zM659 548h1v1h-1zM669 548h1v1h-1zM680 548h1v1h-1zM691 548h1v1h-1zM0 559h1v1h-1zM11 559h1v1h-1zM22 559h1v1h-1zM33 559h1v1h-1zM43 559h1v1h-1zM54 559h1v1h-1zM65 559h1v1h-1zM76 559h1v1h-1zM87 559h1v1h-1zM97 559h1v1h-1zM108 559h1v1h-1zM119 559h1v1h-1zM130 559h1v1h-1zM141 559h1v1h-1zM151 559h1v1h-1zM162 559h1v1h-1zM173 559h1v1h-1zM184 559h1v1h-1zM195 559h1v1h-1zM205 559h1v1h-1zM216 559h1v1h-1zM227 559h1v1h-1zM238 559h1v1h-1zM248 559h1v1h-1zM259 559h1v1h-1zM270 559h1v1h-1zM281 559h1v1h-1zM292 559h1v1h-1zM302 559h1v1h-1zM313 559h1v1h-1zM324 559h1v1h-1zM335 559h1v1h-1zM346 559h1v1h-1zM356 559h1v1h-1zM367 559h1v1h-1zM378 559h1v1h-1zM389 559h1v1h-1zM400 559h1v1h-1zM410 559h1v1h-1zM421 559h1v1h-1zM432 559h1v1h-1zM443 559h1v1h-1zM453 559h1v1h-1zM464 559h1v1h-1zM475 559h1v1h-1zM486 559h1v1h-1zM497 559h1v1h-1zM507 559h1v1h-1zM518 559h1v1h-1zM529 559h1v1h-1zM540 559h1v1h-1zM551 559h1v1h-1zM561 559h1v1h-1zM572 559h1v1h-1zM583 559h1v1h-1zM594 559h1v1h-1zM605 559h1v1h-1zM615 559h1v1h-1zM626 559h1v1h-1zM637 559h1v1h-1zM648 559h1v1h-1zM659 559h1v1h-1zM669 559h1v1h-1zM680 559h1v1h-1zM691 559h1v1h-1zM0 570h1v1h-1zM11 570h1v1h-1zM22 570h1v1h-1zM33 570h1v1h-1zM43 570h1v1h-1zM54 570h1v1h-1zM65 570h1v1h-1zM76 570h1v1h-1zM87 570h1v1h-1zM97 570h1v1h-1zM108 570h1v1h-1zM119 570h1v1h-1zM130 570h1v1h-1zM141 570h1v1h-1zM151 570h1v1h-1zM162 570h1v1h-1zM173 570h1v1h-1zM184 570h1v1h-1zM195 570h1v1h-1zM205 570h1v1h-1zM216 570h1v1h-1zM227 570h1v1h-1zM238 570h1v1h-1zM248 570h1v1h-1zM259 570h1v1h-1zM270 570h1v1h-1zM281 570h1v1h-1zM292 570h1v1h-1zM302 570h1v1h-1zM313 570h1v1h-1zM324 570h1v1h-1zM335 570h1v1h-1zM346 570h1v1h-1zM356 570h1v1h-1zM367 570h1v1h-1zM378 570h1v1h-1zM389 570h1v1h-1zM400 570h1v1h-1zM410 570h1v1h-1zM421 570h1v1h-1zM432 570h1v1h-1zM443 570h1v1h-1zM453 570h1v1h-1zM464 570h1v1h-1zM475 570h1v1h-1zM486 570h1v1h-1zM497 570h1v1h-1zM507 570h1v1h-1zM518 570h1v1h-1zM529 570h1v1h-1zM540 570h1v1h-1zM551 570h1v1h-1zM561 570h1v1h-1zM572 570h1v1h-1zM583 570h1v1h-1zM594 570h1v1h-1zM605 570h1v1h-1zM615 570h1v1h-1zM626 570h1v1h-1zM637 570h1v1h-1zM648 570h1v1h-1zM659 570h1v1h-1zM669 570h1v1h-1zM680 570h1v1h-1zM691 570h1v1h-1zM0 580h1v1h-1zM11 580h1v1h-1zM22 580h1v1h-1zM33 580h1v1h-1zM43 580h1v1h-1zM54 580h1v1h-1zM65 580h1v1h-1zM76 580h1v1h-1zM87 580h1v1h-1zM97 580h1v1h-1zM108 580h1v1h-1zM119 580h1v1h-1zM130 580h1v1h-1zM141 580h1v1h-1zM151 580h1v1h-1zM162 580h1v1h-1zM173 580h1v1h-1zM184 580h1v1h-1zM195 580h1v1h-1zM205 580h1v1h-1zM216 580h1v1h-1zM227 580h1v1h-1zM238 580h1v1h-1zM248 580h1v1h-1zM259 580h1v1h-1zM270 580h1v1h-1zM281 580h1v1h-1zM292 580h1v1h-1zM302 580h1v1h-1zM313 580h1v1h-1zM324 580h1v1h-1zM335 580h1v1h-1zM346 580h1v1h-1zM356 580h1v1h-1zM367 580h1v1h-1zM378 580h1v1h-1zM389 580h1v1h-1zM400 580h1v1h-1zM410 580h1v1h-1zM421 580h1v1h-1zM432 580h1v1h-1zM443 580h1v1h-1zM453 580h1v1h-1zM464 580h1v1h-1zM475 580h1v1h-1zM486 580h1v1h-1zM497 580h1v1h-1zM507 580h1v1h-1zM518 580h1v1h-1zM529 580h1v1h-1zM540 580h1v1h-1zM551 580h1v1h-1zM561 580h1v1h-1zM572 580h1v1h-1zM583 580h1v1h-1zM594 580h1v1h-1zM605 580h1v1h-1zM615 580h1v1h-1zM626 580h1v1h-1zM637 580h1v1h-1zM648 580h1v1h-1zM659 580h1v1h-1zM669 580h1v1h-1zM680 580h1v1h-1zM691 580h1v1h-1zM0 591h1v1h-1zM11 591h1v1h-1zM22 591h1v1h-1zM33 591h1v1h-1zM43 591h1v1h-1zM54 591h1v1h-1zM65 591h1v1h-1zM76 591h1v1h-1zM87 591h1v1h-1zM97 591h1v1h-1zM108 591h1v1h-1zM119 591h1v1h-1zM130 591h1v1h-1zM141 591h1v1h-1zM151 591h1v1h-1zM162 591h1v1h-1zM173 591h1v1h-1zM184 591h1v1h-1zM195 591h1v1h-1zM205 591h1v1h-1zM216 591h1v1h-1zM227 591h1v1h-1zM238 591h1v1h-1zM248 591h1v1h-1zM259 591h1v1h-1zM270 591h1v1h-1zM281 591h1v1h-1zM292 591h1v1h-1zM302 591h1v1h-1zM313 591h1v1h-1zM324 591h1v1h-1zM335 591h1v1h-1zM346 591h1v1h-1zM356 591h1v1h-1zM367 591h1v1h-1zM378 591h1v1h-1zM389 591h1v1h-1zM400 591h1v1h-1zM410 591h1v1h-1zM421 591h1v1h-1zM432 591h1v1h-1zM443 591h1v1h-1zM453 591h1v1h-1zM464 591h1v1h-1zM475 591h1v1h-1zM486 591h1v1h-1zM497 591h1v1h-1zM507 591h1v1h-1zM518 591h1v1h-1zM529 591h1v1h-1zM540 591h1v1h-1zM551 591h1v1h-1zM561 591h1v1h-1zM572 591h1v1h-1zM583 591h1v1h-1zM594 591h1v1h-1zM605 591h1v1h-1zM615 591h1v1h-1zM626 591h1v1h-1zM637 591h1v1h-1zM648 591h1v1h-1zM659 591h1v1h-1zM669 591h1v1h-1zM680 591h1v1h-1zM691 591h1v1h-1zM0 602h1v1h-1zM11 602h1v1h-1zM22 602h1v1h-1zM33 602h1v1h-1zM43 602h1v1h-1zM54 602h1v1h-1zM65 602h1v1h-1zM76 602h1v1h-1zM87 602h1v1h-1zM97 602h1v1h-1zM108 602h1v1h-1zM119 602h1v1h-1zM130 602h1v1h-1zM141 602h1v1h-1zM151 602h1v1h-1zM162 602h1v1h-1zM173 602h1v1h-1zM184 602h1v1h-1zM195 602h1v1h-1zM205 602h1v1h-1zM216 602h1v1h-1zM227 602h1v1h-1zM238 602h1v1h-1zM248 602h1v1h-1zM259 602h1v1h-1zM270 602h1v1h-1zM281 602h1v1h-1zM292 602h1v1h-1zM302 602h1v1h-1zM313 602h1v1h-1zM324 602h1v1h-1zM335 602h1v1h-1zM346 602h1v1h-1zM356 602h1v1h-1zM367 602h1v1h-1zM378 602h1v1h-1zM389 602h1v1h-1zM400 602h1v1h-1zM410 602h1v1h-1zM421 602h1v1h-1zM432 602h1v1h-1zM443 602h1v1h-1zM453 602h1v1h-1zM464 602h1v1h-1zM475 602h1v1h-1zM486 602h1v1h-1zM497 602h1v1h-1zM507 602h1v1h-1zM518 602h1v1h-1zM529 602h1v1h-1zM540 602h1v1h-1zM551 602h1v1h-1zM561 602h1v1h-1zM572 602h1v1h-1zM583 602h1v1h-1zM594 602h1v1h-1zM605 602h1v1h-1zM615 602h1v1h-1zM626 602h1v1h-1zM637 602h1v1h-1zM648 602h1v1h-1zM659 602h1v1h-1zM669 602h1v1h-1zM680 602h1v1h-1zM691 602h1v1h-1zM0 613h1v1h-1zM11 613h1v1h-1zM22 613h1v1h-1zM33 613h1v1h-1zM43 613h1v1h-1zM54 613h1v1h-1zM65 613h1v1h-1zM76 613h1v1h-1zM87 613h1v1h-1zM97 613h1v1h-1zM108 613h1v1h-1zM119 613h1v1h-1zM130 613h1v1h-1zM141 613h1v1h-1zM151 613h1v1h-1zM162 613h1v1h-1zM173 613h1v1h-1zM184 613h1v1h-1zM195 613h1v1h-1zM205 613h1v1h-1zM216 613h1v1h-1zM227 613h1v1h-1zM238 613h1v1h-1zM248 613h1v1h-1zM259 613h1v1h-1zM270 613h1v1h-1zM281 613h1v1h-1zM292 613h1v1h-1zM302 613h1v1h-1zM313 613h1v1h-1zM324 613h1v1h-1zM335 613h1v1h-1zM346 613h1v1h-1zM356 613h1v1h-1zM367 613h1v1h-1zM378 613h1v1h-1zM389 613h1v1h-1zM400 613h1v1h-1zM410 613h1v1h-1zM421 613h1v1h-1zM432 613h1v1h-1zM443 613h1v1h-1zM453 613h1v1h-1zM464 613h1v1h-1zM475 613h1v1h-1zM486 613h1v1h-1zM497 613h1v1h-1zM507 613h1v1h-1zM518 613h1v1h-1zM529 613h1v1h-1zM540 613h1v1h-1zM551 613h1v1h-1zM561 613h1v1h-1zM572 613h1v1h-1zM583 613h1v1h-1zM594 613h1v1h-1zM605 613h1v1h-1zM615 613h1v1h-1zM626 613h1v1h-1zM637 613h1v1h-1zM648 613h1v1h-1zM659 613h1v1h-1zM669 613h1v1h-1zM680 613h1v1h-1zM691 613h1v1h-1z"/>
</svg>
<svg width="697" height="511" viewBox="0 104 697 511" style="position:absolute;left:0;top:0" shape-rendering="crispEdges">
<circle cx="248" cy="400.7" r="123.5" fill="none" stroke="#ff00ff" stroke-width="1"/>
<circle cx="248" cy="400.7" r="21" fill="none" stroke="#ff0000" stroke-width="1"/>
<path d="M326.4 310.5 L284.8 294.6 L249.5 294.6 L243.4 296.3 L235.0 299.0 L228.0 301.4 L220.4 303.3 L216.9 306.0 L210.6 310.5 L203.7 315.3 L196.0 320.5 L188.0 329.8 L176.8 344.1 L173.3 353.7 L163.7 376.0 L160.6 390.7 L159.5 407.6 L161.6 424.6 L164.8 439.4 L171.1 454.2 L176.7 464.5 L194.6 482.5 L221.5 499.2 L248.4 507.8 L271.9 508.2 L295.4 502.0 L322.2 488.0 L337.4 476.4" fill="none" stroke="#6a9840" stroke-width="1"/>
<circle cx="248" cy="401" r="107" fill="none" stroke="#008664" stroke-width="1"/>
<path d="M628 104H636V147H697V155H631L628 152Z" fill="#929310"/>

</svg>
</div>
<div id="split" class="a"></div>
<div class="a" style="left:697px;top:102px;width:1px;height:513px;background:#fff"></div>
<div class="a" style="left:0;top:102px;width:697px;height:1px;background:#a8a8a8"></div>
<div class="a" style="left:0;top:103px;width:697px;height:1px;background:#6a6a6a"></div>
<div class="a" style="left:704px;top:102px;width:1px;height:513px;background:#7a7a7a"></div>
<div id="panel" class="a"></div>
<div class="a" style="left:706px;top:102px;width:98px;height:16px;background:linear-gradient(#f0f0f0,#dcdcdc 55%,#c6c6c6)"></div>
<div class="a" style="left:708px;top:104px;width:3px;height:3px;background:#2a8cff"></div>
<div class="a" style="left:708px;top:109px;width:3px;height:3px;background:#2a8cff"></div>
<div class="a" style="left:715px;top:101px;font-size:12px;color:#000;transform:scaleX(.88);transform-origin:0 0">Find</div>
<!-- group box 1 -->
<div class="a" style="left:713px;top:131px;width:100px;height:229px;border:1px solid #a0a0a0;box-shadow:inset 1px 1px 0 #fff, 1px 1px 0 #fff"></div>
<div class="a" style="left:720px;top:126px;padding:0 2px;background:#f0f0f0;white-space:nowrap;transform:scaleX(.91);transform-origin:0 0">Design Object Find</div>
<div class="btn a" style="left:720px;top:143px;width:46px;height:16px"><span style="display:inline-block;transform:scaleX(.88)">All On</span></div>
<div class="btn a" style="left:776px;top:143px;width:46px;height:16px"><span style="display:inline-block;transform:scaleX(.88)">All Off</span></div>
<div class="cb" style="top:166px"></div><div class="lbl" style="top:165px">Groups</div>
<div class="cb dis" style="top:188px"></div><div class="lbl dis" style="top:187px">Comps</div>
<div class="cb" style="top:210px"><svg width="11" height="11" style="position:absolute;left:0;top:0"><path d="M1.5 5.5l2.3 2.3 4.7-4.7" fill="none" stroke="#000" stroke-width="1.9"/></svg></div><div class="lbl" style="top:209px">Symbols</div>
<div class="cb dis" style="top:233px"></div><div class="lbl dis" style="top:233px">Functions</div>
<div class="cb" style="top:254px"></div><div class="lbl" style="top:253px">Nets</div>
<div class="cb" style="top:276px"></div><div class="lbl" style="top:275px">Pins</div>
<div class="cb" style="top:298px"></div><div class="lbl" style="top:297px">Vias</div>
<div class="cb" style="top:320px"></div><div class="lbl" style="top:319px">Clines</div>
<div class="cb dis" style="top:342px"></div><div class="lbl dis" style="top:341px">Lines</div>
<!-- group box 2 -->
<div class="a" style="left:713px;top:374px;width:100px;height:52px;border:1px solid #a0a0a0;box-shadow:inset 1px 1px 0 #fff, 1px 1px 0 #fff"></div>
<div class="a" style="left:720px;top:368px;padding:0 2px;background:#f0f0f0;white-space:nowrap;transform:scaleX(.89);transform-origin:0 0">Find By Name</div>
<div class="a" style="left:720px;top:383px;width:90px;height:20px;background:#fff;border-top:2px solid #7a7a7a;border-left:2px solid #7a7a7a;border-bottom:1px solid #e8e8e8"></div>
<div class="a" style="left:724px;top:386px;white-space:nowrap;transform:scaleX(.86);transform-origin:0 0">Symbol (or Pin)</div>
<div class="a" style="left:735px;top:406px;width:80px;height:19px;background:#fff;border-top:2px solid #7a7a7a;border-left:2px solid #7a7a7a;border-bottom:1px solid #e8e8e8"></div>
<svg class="a" style="left:720px;top:412px" width="8" height="9"><path d="M1.5 1.5l4 3-4 3" fill="none" stroke="#222" stroke-width="1"/></svg>
</body></html>
